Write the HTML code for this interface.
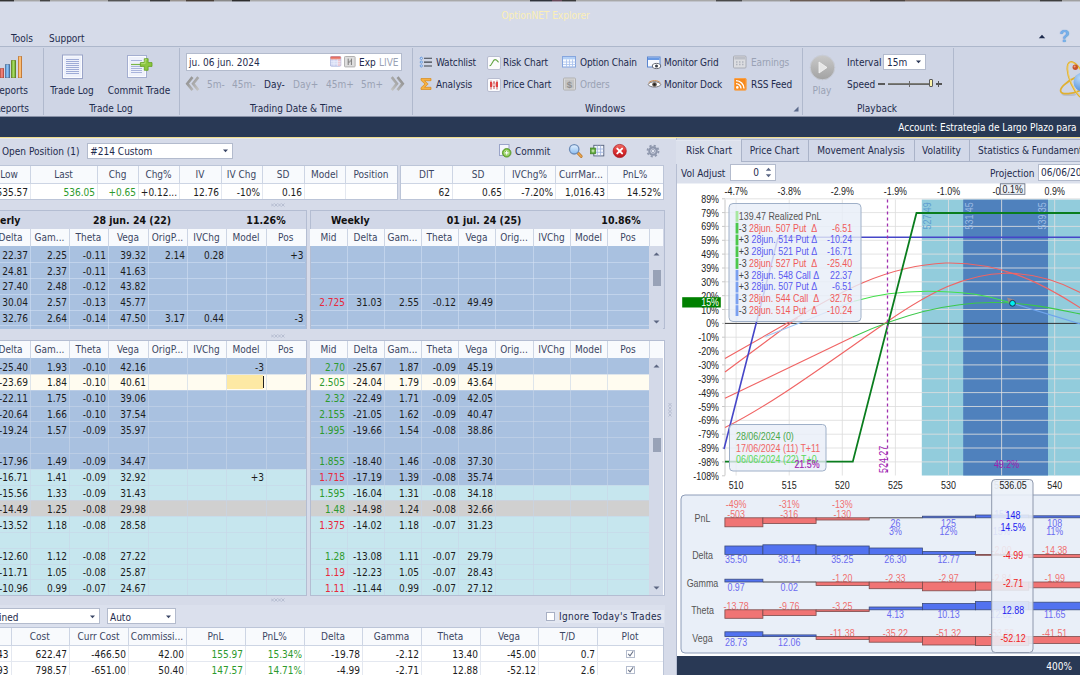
<!DOCTYPE html>
<html lang="en"><head><meta charset="utf-8"><title>OptionNET Explorer</title>
<style>
html,body{margin:0;padding:0}
body{width:1080px;height:675px;overflow:hidden;position:relative;background:#d6dbe9;font-family:"DejaVu Sans Condensed","Liberation Sans",sans-serif;font-size:10px;color:#1e2b4d;line-height:13px}
.b{position:absolute;display:block}
.t{position:absolute;white-space:nowrap;height:13px;line-height:13px}
.dis{color:#9aa2b4}
.a{font-family:"Liberation Sans",sans-serif}
.h{color:#3b4663}
.d{color:#1c1c1c}
.bt{font-weight:bold;color:#111;font-size:10.5px}
.w{letter-spacing:-.12px}
</style></head>
<body>
<div class="b " style="left:0px;top:0px;width:1080px;height:1px;background:linear-gradient(90deg,#333 0px,#333 14px,#a6a6a6 14px,#a6a6a6 40px,#444 40px,#444 50px,#a8a8a8 50px,#a8a8a8 108px,#555 108px,#555 130px,#a0a0a0 130px,#a0a0a0 150px,#3c3c3c 150px,#3c3c3c 170px,#9a9490 170px,#9a9490 186px,#4a4038 186px,#4a4038 214px,#8a8a8a 214px,#8a8a8a 232px,#2e2e2e 232px,#2e2e2e 250px,#a9a9a9 250px,#a9a9a9 530px,#30343c 530px,#30343c 552px,#6a4a5a 552px,#6a4a5a 562px,#3a3a3a 562px,#3a3a3a 576px,#a8a8a8 576px,#a8a8a8 716px,#4a4a4a 716px,#4a4a4a 742px,#9c9c9c 742px,#9c9c9c 790px,#6a5c54 790px,#6a5c54 830px,#8a7a70 830px,#8a7a70 870px,#4c4440 870px,#4c4440 905px,#7c6c64 905px,#7c6c64 950px,#5a524c 950px,#5a524c 1000px,#8c8c8c 1000px,#8c8c8c 1040px,#3e3e3e 1040px,#3e3e3e 1062px,#a0a0a0 1062px,#a0a0a0 1080px)"></div>
<div class="b " style="left:0px;top:1px;width:1080px;height:1px;opacity:.45;background:linear-gradient(90deg,#333 0px,#333 14px,#a6a6a6 14px,#a6a6a6 40px,#444 40px,#444 50px,#a8a8a8 50px,#a8a8a8 108px,#555 108px,#555 130px,#a0a0a0 130px,#a0a0a0 150px,#3c3c3c 150px,#3c3c3c 170px,#9a9490 170px,#9a9490 186px,#4a4038 186px,#4a4038 214px,#8a8a8a 214px,#8a8a8a 232px,#2e2e2e 232px,#2e2e2e 250px,#a9a9a9 250px,#a9a9a9 530px,#30343c 530px,#30343c 552px,#6a4a5a 552px,#6a4a5a 562px,#3a3a3a 562px,#3a3a3a 576px,#a8a8a8 576px,#a8a8a8 716px,#4a4a4a 716px,#4a4a4a 742px,#9c9c9c 742px,#9c9c9c 790px,#6a5c54 790px,#6a5c54 830px,#8a7a70 830px,#8a7a70 870px,#4c4440 870px,#4c4440 905px,#7c6c64 905px,#7c6c64 950px,#5a524c 950px,#5a524c 1000px,#8c8c8c 1000px,#8c8c8c 1040px,#3e3e3e 1040px,#3e3e3e 1062px,#a0a0a0 1062px,#a0a0a0 1080px)"></div>
<div class="t " style="left:445.5px;top:9.25px;color:#fbefb5;width:200px;text-align:center;font-size:10px">OptionNET Explorer</div>
<div class="t " style="left:11px;top:31.75px;">Tools</div>
<div class="t " style="left:49px;top:31.75px;">Support</div>
<svg class="b" style="left:1037.300px;top:32px" width="10" height="8"><path d="M1.800 6.200 L5 2.800 L8.200 6.200Z" fill="#1e2b4d"/></svg>
<div class="t " style="left:1059.5px;top:30.25px;color:#78b0ea;font-weight:bold;font-size:16.500px;font-family:'Liberation Sans',sans-serif;text-shadow:0 0 1px #3f7fc5">?</div>
<div class="b " style="left:0px;top:47px;width:1080px;height:69px;background:#cfd5e5"></div>
<div class="b " style="left:0px;top:46px;width:1080px;height:1px;background:#adb7cb"></div>
<div class="b " style="left:43px;top:48px;width:1px;height:67px;background:#b0b9cd"></div>
<div class="b " style="left:179px;top:48px;width:1px;height:67px;background:#b0b9cd"></div>
<div class="b " style="left:412px;top:48px;width:1px;height:67px;background:#b0b9cd"></div>
<div class="b " style="left:802px;top:48px;width:1px;height:67px;background:#b0b9cd"></div>
<div class="b " style="left:953px;top:48px;width:1px;height:67px;background:#b0b9cd"></div>
<div class="b " style="left:0px;top:68px;width:3.5px;height:9.5px;background:linear-gradient(90deg,#e8645c,#f08a80 50%,#d84c44);border-radius:1px 1px 0 0;box-shadow:inset 0 0 0 .6px rgba(90,50,30,.45)"></div>
<div class="b " style="left:5px;top:64px;width:4.5px;height:13.5px;background:linear-gradient(90deg,#4a90d8,#8cc0f0 50%,#3a7cc4);border-radius:1px 1px 0 0;box-shadow:inset 0 0 0 .6px rgba(90,50,30,.45)"></div>
<div class="b " style="left:11px;top:60px;width:5px;height:17.5px;background:linear-gradient(90deg,#6aa82a,#a4d860 50%,#5a9a20);border-radius:1px 1px 0 0;box-shadow:inset 0 0 0 .6px rgba(90,50,30,.45)"></div>
<div class="b " style="left:17.5px;top:55.5px;width:4.5px;height:22px;background:linear-gradient(90deg,#f09030,#ffd090 50%,#e88428);border-radius:1px 1px 0 0;box-shadow:inset 0 0 0 .6px rgba(90,50,30,.45)"></div>
<div class="t " style="left:-20px;top:83.75px;width:48px;text-align:right;">Reports</div>
<div class="t " style="left:-20px;top:101.75px;width:49px;text-align:right;">Reports</div>
<svg class="b" style="left:61px;top:54px" width="23" height="26" viewBox="0 0 23 26">
<rect x="1.5" y="1" width="20" height="23.5" fill="#fbfcff" stroke="#9aa4c8" stroke-width="1"/>
<rect x="3" y="2.5" width="17" height="20.5" fill="#eef1fb"/>
<g stroke="#9eabd6" stroke-width="1.150"><path d="M5 5.5h13M5 7.5h13M5 9.5h13M5 11.5h13M5 13.5h13M5 15.5h13M5 17.5h13M5 19.5h13"/></g></svg>
<div class="t " style="left:42px;top:83.75px;width:60px;text-align:center;">Trade Log</div>
<svg class="b" style="left:126px;top:54px" width="28" height="26" viewBox="0 0 28 26">
<rect x="1.5" y="1.5" width="19" height="22" fill="#fbfcff" stroke="#a4aed0" stroke-width="1"/>
<rect x="3" y="3" width="16" height="19" fill="#eef1fb"/>
<g stroke="#a9b4dc" stroke-width="1"><path d="M5 6.5h11M5 12.5h11M5 14.5h11M5 16.5h11M5 18.5h11"/></g>
<path d="M5 10.5h10" stroke="#7ab648" stroke-width="1.2"/>
<path d="M14.400 8.600h3.900v-3.900h3.800v3.900h3.900v3.800h-3.900v3.900h-3.800v-3.900h-3.900z" fill="#8cc63f" stroke="#62a01f" stroke-width=".8" stroke-linejoin="round"/><path d="M15.200 9.600h3.900v-3.900h1.800" fill="none" stroke="#c4e88c" stroke-width=".7"/>
</svg>
<div class="t " style="left:99px;top:83.75px;width:80px;text-align:center;">Commit Trade</div>
<div class="t " style="left:71px;top:101.75px;width:80px;text-align:center;">Trade Log</div>
<div class="b " style="left:186px;top:53px;width:215.5px;height:17.6px;background:#fff;border:1px solid #b3bbcd;box-sizing:border-box"></div>
<div class="t " style="left:189px;top:55.75px;">ju. 06 jun. 2024</div>
<svg class="b" style="left:330px;top:56px" width="12" height="11" viewBox="0 0 12 11"><defs><linearGradient id="calh" x1="0" y1="0" x2="0" y2="1"><stop offset="0" stop-color="#e2584a"/><stop offset="1" stop-color="#f0a090"/></linearGradient></defs><rect x=".4" y=".4" width="10.400" height="9.800" rx="1" fill="#d4daf4" stroke="#a9b2dc" stroke-width=".8"/><rect x=".5" y=".5" width="10.200" height="3" rx=".8" fill="url(#calh)"/><rect x="7.600" y="3.600" width="2.900" height="6.200" fill="#f0c4cc"/><path d="M.8 5.700h9.800M.8 7.800h9.800M4 3.600v6.300M7.400 3.600v6.300" stroke="#eef1fc" stroke-width=".7"/></svg>
<svg class="b" style="left:344px;top:55.600px" width="12" height="12" viewBox="0 0 12 12"><rect x=".5" y=".5" width="10.600" height="10.400" rx=".8" fill="#dedede" stroke="#b2b2b2"/><path d="M4.200 2.600v6.400M7.400 2.600v6.400M4.200 6h1.700M5.700 5h1.700" stroke="#7c7c7c" stroke-width="1"/></svg>
<div class="t " style="left:359px;top:55.75px;">Exp</div>
<div class="t dis" style="left:379px;top:55.75px;">LIVE</div>
<svg class="b" style="left:184.5px;top:76px" width="16" height="16" viewBox="0 0 16 16"><defs><linearGradient id="cg1" x1="0" y1="0" x2="1" y2="1"><stop offset="0" stop-color="#8c8c8c"/><stop offset="1" stop-color="#c4c4c4"/></linearGradient></defs><g fill="none" stroke="url(#cg1)" stroke-width="2.700" stroke-linejoin="miter"><path d="M7.500 1.200 L2.300 7.700 L7.500 14.200 M13.300 1.200 L8.100 7.700 L13.300 14.200"/></g></svg>
<svg class="b" style="left:389px;top:76px" width="16" height="16" viewBox="0 0 16 16"><defs><linearGradient id="cg2" x1="1" y1="0" x2="0" y2="1"><stop offset="0" stop-color="#8c8c8c"/><stop offset="1" stop-color="#c4c4c4"/></linearGradient></defs><g fill="none" stroke="url(#cg2)" stroke-width="2.700" stroke-linejoin="miter"><path d="M2.700 1.200 L7.900 7.700 L2.700 14.200 M8.500 1.200 L13.700 7.700 L8.500 14.200"/></g></svg>
<div class="t dis" style="left:207px;top:77.75px;">5m-</div>
<div class="t dis" style="left:232px;top:77.75px;">45m-</div>
<div class="t " style="left:264px;top:77.75px;">Day-</div>
<div class="t dis" style="left:293px;top:77.75px;">Day+</div>
<div class="t dis" style="left:326px;top:77.75px;">45m+</div>
<div class="t dis" style="left:361px;top:77.75px;">5m+</div>
<div class="t " style="left:236px;top:101.75px;width:120px;text-align:center;">Trading Date &amp; Time</div>
<svg class="b" style="left:419px;top:56px" width="14" height="12" viewBox="0 0 14 12"><g fill="#eaf2ff" stroke="#4a86d8" stroke-width=".8"><circle cx="2.300" cy="2.300" r="1.100"/><circle cx="2.300" cy="6.100" r="1.100"/><circle cx="2.300" cy="9.900" r="1.100"/></g><path d="M5 2.300h8M5 6.100h8M5 9.900h8" stroke="#3f444e" stroke-width="1.050"/></svg>
<div class="t " style="left:436px;top:56.25px;letter-spacing:-.15px">Watchlist</div>
<svg class="b" style="left:419px;top:77px" width="14" height="14" viewBox="0 0 14 14"><path d="M2 1.5h10v2.2H5.6l3.6 3.3-3.6 3.3H12v2.2H2v-1.8l4-3.7-4-3.7z" fill="#f6b042" stroke="#d88a1c" stroke-width=".7"/></svg>
<div class="t w" style="left:436px;top:78.15px;">Analysis</div>
<svg class="b" style="left:487px;top:55.500px" width="14" height="14" viewBox="0 0 14 14"><rect x=".5" y=".5" width="13" height="13" rx="1.5" fill="#fbfbfd" stroke="#b8bdd0"/><path d="M2.500 9.800C5 9.800 5.600 3.600 8 3.600S10.400 5.800 11.600 6.200" fill="none" stroke="#63a544" stroke-width="1.100"/></svg>
<div class="t w" style="left:503px;top:56.25px;">Risk Chart</div>
<svg class="b" style="left:487px;top:77.500px" width="14" height="14" viewBox="0 0 14 14"><rect x=".5" y=".5" width="13" height="13" rx="1.5" fill="#fbfbfd" stroke="#b8bdd0"/><path d="M4 2.5v9M7 3v8M10 2.5v9" stroke="#c03030" stroke-width=".8"/><rect x="3" y="4" width="2" height="5" fill="#e04040"/><rect x="6" y="5" width="2" height="3.5" fill="#fff" stroke="#c03030" stroke-width=".6"/><rect x="9" y="4" width="2" height="5" fill="#e04040"/></svg>
<div class="t w" style="left:503px;top:78.15px;">Price Chart</div>
<svg class="b" style="left:562px;top:55px" width="15" height="14" viewBox="0 0 15 14"><rect x=".5" y="1.500" width="13" height="10.500" fill="#fafcff" stroke="#86a6de"/><rect x="1" y="2" width="12" height="2.300" fill="#b4d0f6"/><path d="M1 7h12.5M1 9.5h12.5M4.5 4.5v8M7.5 4.5v8M10.5 4.5v8" stroke="#a8c0ec" stroke-width=".8"/></svg>
<div class="t " style="left:580px;top:56.25px;letter-spacing:-.15px">Option Chain</div>
<svg class="b" style="left:563px;top:77px" width="13" height="14" viewBox="0 0 13 14"><rect x=".5" y="1" width="12" height="12" rx="1" fill="#d9d9d9" stroke="#b0b0b0"/><rect x="2" y="2.5" width="9" height="9" fill="#c4c4c4"/><text x="6.500" y="10.800" font-size="9.500" font-weight="bold" text-anchor="middle" fill="#909090" font-family="Liberation Sans">$</text></svg>
<div class="t dis w" style="left:580px;top:78.15px;">Orders</div>
<svg class="b" style="left:647px;top:56px" width="15" height="14" viewBox="0 0 15 14"><rect x=".5" y="1" width="12.5" height="10" fill="#f6f9ff" stroke="#5a86d0"/><rect x="1" y="1.5" width="11.5" height="2.5" fill="#6a9ae4"/><ellipse cx="9.5" cy="10" rx="4.2" ry="2.6" fill="#fff" stroke="#555a66" stroke-width=".9"/><circle cx="9.5" cy="10" r="1.5" fill="#39404e"/></svg>
<div class="t w" style="left:664px;top:56.25px;">Monitor Grid</div>
<svg class="b" style="left:647px;top:78px" width="15" height="12" viewBox="0 0 15 12"><path d="M1 6.5C3.5 2.8 11.5 2.8 14 6.5 11.5 10 3.5 10 1 6.5z" fill="#fff" stroke="#6a6a72" stroke-width=".9"/><path d="M1.5 5C4 1.8 11 1.8 13.5 5" fill="none" stroke="#d09050" stroke-width="1"/><circle cx="7.5" cy="6.5" r="2.3" fill="#5a5048"/><circle cx="7.5" cy="6.5" r="1" fill="#1a1a1a"/></svg>
<div class="t w" style="left:664px;top:78.15px;">Monitor Dock</div>
<svg class="b" style="left:733px;top:55px" width="14" height="14" viewBox="0 0 14 14"><rect x=".5" y="1" width="12.500" height="12" rx="1" fill="#dcdde1" stroke="#a9acb5"/><rect x="1.500" y="2" width="10.500" height="2.500" fill="#bcbfc7"/><path d="M3 7h1.5M6 7h1.5M9 7h1.5M3 9.5h1.5M6 9.5h1.5M9 9.5h1.5" stroke="#b0b4be" stroke-width="1.4"/></svg>
<div class="t dis w" style="left:751px;top:56.25px;">Earnings</div>
<svg class="b" style="left:734px;top:78px" width="13" height="13" viewBox="0 0 13 13"><rect x="0" y="0" width="12.5" height="12.5" rx="1.5" fill="#f58a1f"/><rect x=".5" y=".5" width="11.5" height="11.5" rx="1.2" fill="none" stroke="#ffb060" stroke-width=".6"/><circle cx="3.3" cy="9.4" r="1.3" fill="#fff"/><path d="M2 5.6a5 5 0 0 1 5 5M2 2.6a8 8 0 0 1 8 8" fill="none" stroke="#fff" stroke-width="1.4"/></svg>
<div class="t w" style="left:751px;top:78.15px;">RSS Feed</div>
<div class="t " style="left:565px;top:101.75px;width:80px;text-align:center;">Windows</div>
<svg class="b" style="left:793px;top:106px" width="6" height="6"><path d="M5.5 .5V5.5H.5Z" fill="#5c6b8c"/></svg>
<svg class="b" style="left:809px;top:53.500px" width="27" height="27" viewBox="0 0 27 27"><defs><linearGradient id="pg" x1="0" y1="0" x2="0" y2="1"><stop offset="0" stop-color="#c9c9c9"/><stop offset="1" stop-color="#a2a2a2"/></linearGradient></defs><circle cx="13.5" cy="13.5" r="12.3" fill="url(#pg)" stroke="#c8ccd6" stroke-width="1"/><path d="M10 8l8 5.5-8 5.5z" fill="#e6e6e6" stroke="#f4f4f4" stroke-width=".8"/></svg>
<div class="t dis" style="left:802px;top:83.75px;width:40px;text-align:center;">Play</div>
<div class="t " style="left:847px;top:56.25px;">Interval</div>
<div class="b " style="left:883px;top:53.6px;width:42.5px;height:16.8px;background:#fff;border:1px solid #b3bbcd;box-sizing:border-box"></div>
<div class="t " style="left:887px;top:55.75px;">15m</div>
<svg class="b" style="left:915px;top:60px" width="7" height="4"><path d="M1 .6h5L3.500 3.300z" fill="#2a3656"/></svg>
<div class="t " style="left:847px;top:78.15px;">Speed</div>
<div class="b " style="left:878.3px;top:83px;width:6.4px;height:1.6px;background:#5a5a5a"></div>
<div class="b " style="left:888px;top:83px;width:42px;height:1.6px;background:linear-gradient(#8a8a82,#5c5c5c)"></div>
<div class="b " style="left:908.8px;top:81px;width:1.5px;height:5.5px;background:#6a6a6a"></div>
<div class="b " style="left:929px;top:79px;width:3.8px;height:8px;background:#fbf3a8;border:1px solid #5a5a5a;box-sizing:border-box;border-radius:1px"></div>
<div class="b " style="left:935.7px;top:83px;width:6px;height:1.6px;background:#555"></div>
<div class="b " style="left:937.9px;top:80.8px;width:1.6px;height:6px;background:#555"></div>
<div class="t " style="left:837px;top:101.75px;width:80px;text-align:center;">Playback</div>
<svg class="b" style="left:1056px;top:56px" width="24" height="48" viewBox="1056 56 24 48"><defs><radialGradient id="sg" cx=".35" cy=".3" r=".8"><stop offset="0" stop-color="#b8d8f8"/><stop offset="1" stop-color="#4a8ad8"/></radialGradient></defs><ellipse cx="1069" cy="94.500" rx="7.500" ry="1.600" fill="#a8acb8" opacity=".55"/><g fill="none" stroke="#e0b030" stroke-width="1.700"><ellipse cx="1078" cy="80.500" rx="7.500" ry="20" transform="rotate(-24 1078 80.500)"/><ellipse cx="1080" cy="83" rx="21" ry="7" transform="rotate(-24 1080 83)"/></g><g fill="none" stroke="#f8e08a" stroke-width=".6"><ellipse cx="1078" cy="80.500" rx="7" ry="19.500" transform="rotate(-24 1078 80.500)"/></g><circle cx="1083" cy="82" r="9.500" fill="url(#sg)"/><circle cx="1075.300" cy="67.200" r="2.700" fill="#c8522a"/><circle cx="1074.600" cy="66.500" r="1" fill="#f0a080"/></svg>
<div class="b " style="left:0px;top:116px;width:1080px;height:1px;background:#8790a6"></div>
<div class="b " style="left:0px;top:117px;width:1080px;height:20px;background:#293955"></div>
<div class="b " style="left:0px;top:137px;width:1080px;height:1px;background:#efdc8e"></div>
<div class="b " style="left:0px;top:138px;width:1080px;height:1px;background:#e6e8ea"></div>
<div class="t " style="left:776.5px;top:120.75px;width:300px;text-align:right;color:#fff;letter-spacing:-.05px">Account: Estrategia de Largo Plazo para</div>
<div class="t " style="left:2px;top:144.5px;">Open Position (1)</div>
<div class="b " style="left:87px;top:143px;width:146px;height:16px;background:#fff;border:1px solid #b3bbcd;box-sizing:border-box"></div>
<div class="t " style="left:90.3px;top:144.5px;">#214 Custom</div>
<svg class="b" style="left:222px;top:149px" width="7" height="4"><path d="M1 .6h5L3.500 3.300z" fill="#3a4666"/></svg>
<svg class="b" style="left:498px;top:143px" width="15" height="15" viewBox="498 143 15 15"><rect x="499.500" y="144.500" width="9.500" height="11" fill="#f4f6fc" stroke="#9aa4c8"/><circle cx="506.700" cy="152.800" r="4.300" fill="#76bc3c" stroke="#4f8f22" stroke-width=".8"/><circle cx="506.700" cy="152.800" r="2.600" fill="none" stroke="#c8eaa4" stroke-width=".7"/><path d="M504.700 152.800h4M506.700 150.800v4" stroke="#fff" stroke-width="1.200"/></svg>
<div class="t " style="left:515px;top:144.5px;">Commit</div>
<svg class="b" style="left:567px;top:142px" width="17" height="17" viewBox="567 142 17 17"><defs><linearGradient id="lg1" x1="0" y1="0" x2="0" y2="1"><stop offset="0" stop-color="#e4f2ff"/><stop offset="1" stop-color="#8cbcf0"/></linearGradient></defs><path d="M577.500 152.500l3.600 3.800" stroke="#b87428" stroke-width="3" stroke-linecap="round"/><path d="M577.500 152.500l3.600 3.800" stroke="#eca850" stroke-width="1.600" stroke-linecap="round"/><circle cx="574.200" cy="149.300" r="4.700" fill="url(#lg1)" stroke="#6c8cb8" stroke-width="1.300"/></svg>
<svg class="b" style="left:589px;top:143px" width="16" height="15" viewBox="589 143 16 15"><rect x="593.800" y="145.300" width="10" height="10.600" fill="#f4f7fd" stroke="#55627e" stroke-width=".9"/><path d="M597.300 145.500v10.200M600.600 145.500v10.200M594 149h9.600M594 152.300h9.600" stroke="#9ab0dc" stroke-width=".8"/><rect x="590.500" y="148" width="5" height="5.800" fill="#5faa3c" stroke="#3f7f22" stroke-width=".7"/><path d="M591.500 150.900h3M593 149.400v3" stroke="#dff2c8" stroke-width=".9"/></svg>
<svg class="b" style="left:611px;top:143px" width="17" height="16" viewBox="611 143 17 16"><defs><linearGradient id="lg2" x1="0" y1="0" x2="0" y2="1"><stop offset="0" stop-color="#f07068"/><stop offset=".5" stop-color="#dc3030"/><stop offset="1" stop-color="#b81820"/></linearGradient></defs><circle cx="619.700" cy="151" r="6.600" fill="url(#lg2)" stroke="#a81820" stroke-width=".7"/><path d="M617.300 148.600l4.800 4.800M622.100 148.600l-4.800 4.800" stroke="#fff" stroke-width="2" stroke-linecap="round"/></svg>
<svg class="b" style="left:645px;top:143px" width="16" height="16" viewBox="645 143 16 16"><circle cx="653" cy="151" r="5.500" fill="none" stroke="#8e97ad" stroke-width="1.800" stroke-dasharray="2.160 2.160"/><circle cx="653" cy="151" r="3.700" fill="#d6dbe9" stroke="#8e97ad" stroke-width="2.200"/><circle cx="653" cy="151" r="1.700" fill="#dfe3ee" stroke="#8e97ad" stroke-width=".7"/></svg>
<div class="b " style="left:-12px;top:165px;width:410px;height:35px;background:#fff;border:1px solid #bcc5d8;box-sizing:border-box"></div>
<div class="b " style="left:-12px;top:166px;width:409px;height:17px;background:#f8fafd"></div>
<div class="t h" style="left:-12px;top:168.0px;width:42px;text-align:center;">Low</div>
<div class="t h" style="left:30px;top:168.0px;width:67px;text-align:center;">Last</div>
<div class="t h" style="left:97px;top:168.0px;width:41px;text-align:center;">Chg</div>
<div class="t h" style="left:138px;top:168.0px;width:41px;text-align:center;">Chg%</div>
<div class="t h" style="left:179px;top:168.0px;width:42px;text-align:center;">IV</div>
<div class="t h" style="left:221px;top:168.0px;width:41px;text-align:center;">IV Chg</div>
<div class="t h" style="left:262px;top:168.0px;width:42px;text-align:center;">SD</div>
<div class="t h" style="left:304px;top:168.0px;width:41px;text-align:center;">Model</div>
<div class="t h" style="left:345px;top:168.0px;width:52px;text-align:center;">Position</div>
<div class="b " style="left:30px;top:166px;width:1px;height:17px;background:#cdd5e4"></div>
<div class="b " style="left:97px;top:166px;width:1px;height:17px;background:#cdd5e4"></div>
<div class="b " style="left:138px;top:166px;width:1px;height:17px;background:#cdd5e4"></div>
<div class="b " style="left:179px;top:166px;width:1px;height:17px;background:#cdd5e4"></div>
<div class="b " style="left:221px;top:166px;width:1px;height:17px;background:#cdd5e4"></div>
<div class="b " style="left:262px;top:166px;width:1px;height:17px;background:#cdd5e4"></div>
<div class="b " style="left:304px;top:166px;width:1px;height:17px;background:#cdd5e4"></div>
<div class="b " style="left:345px;top:166px;width:1px;height:17px;background:#cdd5e4"></div>
<div class="b " style="left:-12px;top:183px;width:409px;height:1px;background:#cdd5e4"></div>
<div class="b " style="left:30px;top:184px;width:1px;height:15px;background:#e4e8f0"></div>
<div class="b " style="left:97px;top:184px;width:1px;height:15px;background:#e4e8f0"></div>
<div class="b " style="left:138px;top:184px;width:1px;height:15px;background:#e4e8f0"></div>
<div class="b " style="left:179px;top:184px;width:1px;height:15px;background:#e4e8f0"></div>
<div class="b " style="left:221px;top:184px;width:1px;height:15px;background:#e4e8f0"></div>
<div class="b " style="left:262px;top:184px;width:1px;height:15px;background:#e4e8f0"></div>
<div class="b " style="left:304px;top:184px;width:1px;height:15px;background:#e4e8f0"></div>
<div class="b " style="left:345px;top:184px;width:1px;height:15px;background:#e4e8f0"></div>
<div class="t d" style="left:-12px;top:186.0px;width:40px;text-align:right;">535.57</div>
<div class="t d" style="left:30px;top:186.0px;width:65px;text-align:right;color:#2d9a2d;">536.05</div>
<div class="t d" style="left:97px;top:186.0px;width:39px;text-align:right;color:#2d9a2d;">+0.65</div>
<div class="t d" style="left:138px;top:186.0px;width:39px;text-align:right;">+0.12...</div>
<div class="t d" style="left:179px;top:186.0px;width:40px;text-align:right;">12.76</div>
<div class="t d" style="left:221px;top:186.0px;width:39px;text-align:right;">-10%</div>
<div class="t d" style="left:262px;top:186.0px;width:40px;text-align:right;">0.16</div>
<div class="b " style="left:400px;top:165px;width:264px;height:35px;background:#fff;border:1px solid #bcc5d8;box-sizing:border-box"></div>
<div class="b " style="left:401px;top:166px;width:262px;height:17px;background:#f8fafd"></div>
<div class="t h" style="left:401px;top:168.0px;width:51px;text-align:center;">DIT</div>
<div class="t h" style="left:452px;top:168.0px;width:52px;text-align:center;">SD</div>
<div class="t h" style="left:504px;top:168.0px;width:51px;text-align:center;">IVChg%</div>
<div class="t h" style="left:555px;top:168.0px;width:52px;text-align:center;">CurrMar...</div>
<div class="t h" style="left:607px;top:168.0px;width:56px;text-align:center;">PnL%</div>
<div class="b " style="left:452px;top:166px;width:1px;height:17px;background:#cdd5e4"></div>
<div class="b " style="left:504px;top:166px;width:1px;height:17px;background:#cdd5e4"></div>
<div class="b " style="left:555px;top:166px;width:1px;height:17px;background:#cdd5e4"></div>
<div class="b " style="left:607px;top:166px;width:1px;height:17px;background:#cdd5e4"></div>
<div class="b " style="left:401px;top:183px;width:262px;height:1px;background:#cdd5e4"></div>
<div class="b " style="left:452px;top:184px;width:1px;height:15px;background:#e4e8f0"></div>
<div class="b " style="left:504px;top:184px;width:1px;height:15px;background:#e4e8f0"></div>
<div class="b " style="left:555px;top:184px;width:1px;height:15px;background:#e4e8f0"></div>
<div class="b " style="left:607px;top:184px;width:1px;height:15px;background:#e4e8f0"></div>
<div class="t d" style="left:401px;top:186.0px;width:49px;text-align:right;">62</div>
<div class="t d" style="left:452px;top:186.0px;width:50px;text-align:right;">0.65</div>
<div class="t d" style="left:504px;top:186.0px;width:49px;text-align:right;">-7.20%</div>
<div class="t d" style="left:555px;top:186.0px;width:50px;text-align:right;">1,016.43</div>
<div class="t d" style="left:607px;top:186.0px;width:54px;text-align:right;">14.52%</div>
<svg class="b" style="left:271px;top:203px" width="14" height="4"><path d="M0 .5l3 3M3 .5l-3 3M3.500 .5l3 3M6.500 .5l-3 3M7 .5l3 3M10 .5l-3 3M10.500 .5l3 3M13.500 .5l-3 3" stroke="#aab3c8" stroke-width=".7"/></svg>
<svg class="b" style="left:271px;top:334px" width="14" height="4"><path d="M0 .5l3 3M3 .5l-3 3M3.500 .5l3 3M6.500 .5l-3 3M7 .5l3 3M10 .5l-3 3M10.500 .5l3 3M13.500 .5l-3 3" stroke="#aab3c8" stroke-width=".7"/></svg>
<svg class="b" style="left:271px;top:598px" width="14" height="4"><path d="M0 .5l3 3M3 .5l-3 3M3.500 .5l3 3M6.500 .5l-3 3M7 .5l3 3M10 .5l-3 3M10.500 .5l3 3M13.500 .5l-3 3" stroke="#aab3c8" stroke-width=".7"/></svg>
<svg class="b" style="left:668.400px;top:402.500px" width="4" height="14"><path d="M.5 0l3 3M.5 3l3-3M.5 3.500l3 3M.5 6.500l3-3M.5 7l3 3M.5 10l3-3M.5 10.500l3 3M.5 13.500l3-3" stroke="#aab3c8" stroke-width=".7"/></svg>
<div class="b " style="left:-9px;top:210px;width:315.5px;height:119px;background:#d1d7e7;border:1px solid #b4bdd2;box-sizing:border-box"></div>
<div class="t bt" style="left:0px;top:214px;">erly</div>
<div class="t bt" style="left:82px;top:214px;width:100px;text-align:center;">28 jun. 24 (22)</div>
<div class="t bt" style="left:236px;top:214px;width:60px;text-align:center;">11.26%</div>
<div class="b " style="left:-9px;top:229px;width:314.5px;height:17px;background:#f8fafd"></div>
<div class="t h" style="left:-9px;top:231.0px;width:39px;text-align:center;">Delta</div>
<div class="t h" style="left:30px;top:231.0px;width:39px;text-align:center;">Gam...</div>
<div class="t h" style="left:69px;top:231.0px;width:39px;text-align:center;">Theta</div>
<div class="t h" style="left:108px;top:231.0px;width:40px;text-align:center;">Vega</div>
<div class="t h" style="left:148px;top:231.0px;width:39px;text-align:center;">OrigP...</div>
<div class="t h" style="left:187px;top:231.0px;width:39px;text-align:center;">IVChg</div>
<div class="t h" style="left:226px;top:231.0px;width:40px;text-align:center;">Model</div>
<div class="t h" style="left:266px;top:231.0px;width:39.5px;text-align:center;">Pos</div>
<div class="b " style="left:30px;top:229px;width:1px;height:17px;background:#cdd5e4"></div>
<div class="b " style="left:69px;top:229px;width:1px;height:17px;background:#cdd5e4"></div>
<div class="b " style="left:108px;top:229px;width:1px;height:17px;background:#cdd5e4"></div>
<div class="b " style="left:148px;top:229px;width:1px;height:17px;background:#cdd5e4"></div>
<div class="b " style="left:187px;top:229px;width:1px;height:17px;background:#cdd5e4"></div>
<div class="b " style="left:226px;top:229px;width:1px;height:17px;background:#cdd5e4"></div>
<div class="b " style="left:266px;top:229px;width:1px;height:17px;background:#cdd5e4"></div>
<div class="b " style="left:-9px;top:246px;width:314.5px;height:82.5px;background:#a9c1e0"></div>
<div class="t d" style="left:-9px;top:248.8px;width:37px;text-align:right;">22.37</div>
<div class="t d" style="left:30px;top:248.8px;width:37px;text-align:right;">2.25</div>
<div class="t d" style="left:69px;top:248.8px;width:37px;text-align:right;">-0.11</div>
<div class="t d" style="left:108px;top:248.8px;width:38px;text-align:right;">39.32</div>
<div class="t d" style="left:148px;top:248.8px;width:37px;text-align:right;">2.14</div>
<div class="t d" style="left:187px;top:248.8px;width:37px;text-align:right;">0.28</div>
<div class="t d" style="left:266px;top:248.8px;width:37.5px;text-align:right;">+3</div>
<div class="t d" style="left:-9px;top:264.59999999999997px;width:37px;text-align:right;">24.81</div>
<div class="t d" style="left:30px;top:264.59999999999997px;width:37px;text-align:right;">2.37</div>
<div class="t d" style="left:69px;top:264.59999999999997px;width:37px;text-align:right;">-0.11</div>
<div class="t d" style="left:108px;top:264.59999999999997px;width:38px;text-align:right;">41.63</div>
<div class="t d" style="left:-9px;top:280.4px;width:37px;text-align:right;">27.40</div>
<div class="t d" style="left:30px;top:280.4px;width:37px;text-align:right;">2.48</div>
<div class="t d" style="left:69px;top:280.4px;width:37px;text-align:right;">-0.12</div>
<div class="t d" style="left:108px;top:280.4px;width:38px;text-align:right;">43.82</div>
<div class="t d" style="left:-9px;top:296.2px;width:37px;text-align:right;">30.04</div>
<div class="t d" style="left:30px;top:296.2px;width:37px;text-align:right;">2.57</div>
<div class="t d" style="left:69px;top:296.2px;width:37px;text-align:right;">-0.13</div>
<div class="t d" style="left:108px;top:296.2px;width:38px;text-align:right;">45.77</div>
<div class="t d" style="left:-9px;top:312.0px;width:37px;text-align:right;">32.76</div>
<div class="t d" style="left:30px;top:312.0px;width:37px;text-align:right;">2.64</div>
<div class="t d" style="left:69px;top:312.0px;width:37px;text-align:right;">-0.14</div>
<div class="t d" style="left:108px;top:312.0px;width:38px;text-align:right;">47.50</div>
<div class="t d" style="left:148px;top:312.0px;width:37px;text-align:right;">3.17</div>
<div class="t d" style="left:187px;top:312.0px;width:37px;text-align:right;">0.44</div>
<div class="t d" style="left:266px;top:312.0px;width:37.5px;text-align:right;">-3</div>
<div class="b " style="left:-9px;top:262px;width:314px;height:1px;background:rgba(214,226,244,.55)"></div>
<div class="b " style="left:-9px;top:278px;width:314px;height:1px;background:rgba(214,226,244,.55)"></div>
<div class="b " style="left:-9px;top:294px;width:314px;height:1px;background:rgba(214,226,244,.55)"></div>
<div class="b " style="left:-9px;top:310px;width:314px;height:1px;background:rgba(214,226,244,.55)"></div>
<div class="b " style="left:-9px;top:325px;width:314px;height:1px;background:rgba(214,226,244,.55)"></div>
<div class="b " style="left:30px;top:246px;width:1px;height:82.5px;background:rgba(214,226,244,.55)"></div>
<div class="b " style="left:69px;top:246px;width:1px;height:82.5px;background:rgba(214,226,244,.55)"></div>
<div class="b " style="left:108px;top:246px;width:1px;height:82.5px;background:rgba(214,226,244,.55)"></div>
<div class="b " style="left:148px;top:246px;width:1px;height:82.5px;background:rgba(214,226,244,.55)"></div>
<div class="b " style="left:187px;top:246px;width:1px;height:82.5px;background:rgba(214,226,244,.55)"></div>
<div class="b " style="left:226px;top:246px;width:1px;height:82.5px;background:rgba(214,226,244,.55)"></div>
<div class="b " style="left:266px;top:246px;width:1px;height:82.5px;background:rgba(214,226,244,.55)"></div>
<div class="b " style="left:309.5px;top:210px;width:355.0px;height:119px;background:#d1d7e7;border:1px solid #b4bdd2;box-sizing:border-box"></div>
<div class="t bt" style="left:331px;top:214px;">Weekly</div>
<div class="t bt" style="left:434px;top:214px;width:100px;text-align:center;">01 jul. 24 (25)</div>
<div class="t bt" style="left:591px;top:214px;width:60px;text-align:center;">10.86%</div>
<div class="b " style="left:310px;top:229px;width:353px;height:17px;background:#f8fafd"></div>
<div class="t h" style="left:310px;top:231.0px;width:37px;text-align:center;">Mid</div>
<div class="t h" style="left:347px;top:231.0px;width:37px;text-align:center;">Delta</div>
<div class="t h" style="left:384px;top:231.0px;width:37px;text-align:center;">Gam...</div>
<div class="t h" style="left:421px;top:231.0px;width:37px;text-align:center;">Theta</div>
<div class="t h" style="left:458px;top:231.0px;width:37px;text-align:center;">Vega</div>
<div class="t h" style="left:495px;top:231.0px;width:38px;text-align:center;">Orig...</div>
<div class="t h" style="left:533px;top:231.0px;width:37px;text-align:center;">IVChg</div>
<div class="t h" style="left:570px;top:231.0px;width:37px;text-align:center;">Model</div>
<div class="t h" style="left:607px;top:231.0px;width:42px;text-align:center;">Pos</div>
<div class="t h" style="left:649px;top:231.0px;width:14px;text-align:center;"></div>
<div class="b " style="left:347px;top:229px;width:1px;height:17px;background:#cdd5e4"></div>
<div class="b " style="left:384px;top:229px;width:1px;height:17px;background:#cdd5e4"></div>
<div class="b " style="left:421px;top:229px;width:1px;height:17px;background:#cdd5e4"></div>
<div class="b " style="left:458px;top:229px;width:1px;height:17px;background:#cdd5e4"></div>
<div class="b " style="left:495px;top:229px;width:1px;height:17px;background:#cdd5e4"></div>
<div class="b " style="left:533px;top:229px;width:1px;height:17px;background:#cdd5e4"></div>
<div class="b " style="left:570px;top:229px;width:1px;height:17px;background:#cdd5e4"></div>
<div class="b " style="left:607px;top:229px;width:1px;height:17px;background:#cdd5e4"></div>
<div class="b " style="left:649px;top:229px;width:1px;height:17px;background:#cdd5e4"></div>
<div class="b " style="left:310.5px;top:246px;width:338.5px;height:82.5px;background:#a9c1e0"></div>
<div class="t d" style="left:310px;top:296.2px;width:35px;text-align:right;color:#e8283c;">2.725</div>
<div class="t d" style="left:347px;top:296.2px;width:35px;text-align:right;">31.03</div>
<div class="t d" style="left:384px;top:296.2px;width:35px;text-align:right;">2.55</div>
<div class="t d" style="left:421px;top:296.2px;width:35px;text-align:right;">-0.12</div>
<div class="t d" style="left:458px;top:296.2px;width:35px;text-align:right;">49.49</div>
<div class="b " style="left:310.5px;top:262px;width:338.5px;height:1px;background:rgba(214,226,244,.55)"></div>
<div class="b " style="left:310.5px;top:278px;width:338.5px;height:1px;background:rgba(214,226,244,.55)"></div>
<div class="b " style="left:310.5px;top:294px;width:338.5px;height:1px;background:rgba(214,226,244,.55)"></div>
<div class="b " style="left:310.5px;top:310px;width:338.5px;height:1px;background:rgba(214,226,244,.55)"></div>
<div class="b " style="left:310.5px;top:325px;width:338.5px;height:1px;background:rgba(214,226,244,.55)"></div>
<div class="b " style="left:347px;top:246px;width:1px;height:82.5px;background:rgba(214,226,244,.55)"></div>
<div class="b " style="left:384px;top:246px;width:1px;height:82.5px;background:rgba(214,226,244,.55)"></div>
<div class="b " style="left:421px;top:246px;width:1px;height:82.5px;background:rgba(214,226,244,.55)"></div>
<div class="b " style="left:458px;top:246px;width:1px;height:82.5px;background:rgba(214,226,244,.55)"></div>
<div class="b " style="left:495px;top:246px;width:1px;height:82.5px;background:rgba(214,226,244,.55)"></div>
<div class="b " style="left:533px;top:246px;width:1px;height:82.5px;background:rgba(214,226,244,.55)"></div>
<div class="b " style="left:570px;top:246px;width:1px;height:82.5px;background:rgba(214,226,244,.55)"></div>
<div class="b " style="left:607px;top:246px;width:1px;height:82.5px;background:rgba(214,226,244,.55)"></div>
<div class="b " style="left:649px;top:246px;width:14px;height:82.5px;background:#d3d9e8"></div>
<svg class="b" style="left:653px;top:252px" width="7" height="4"><path d="M.5 3.500h6L3.500 .5z" fill="#5c6782"/></svg>
<svg class="b" style="left:653px;top:319.5px" width="7" height="4"><path d="M.5 .5h6L3.500 3.500z" fill="#5c6782"/></svg>
<div class="b " style="left:652.5px;top:270px;width:8.5px;height:15.5px;background:#98a2b7"></div>
<div class="b " style="left:-9px;top:340px;width:315.5px;height:256px;background:#fff;border:1px solid #b4bdd2;box-sizing:border-box"></div>
<div class="b " style="left:-9px;top:341px;width:314.5px;height:17px;background:#f8fafd"></div>
<div class="t h" style="left:-9px;top:343.0px;width:39px;text-align:center;">Delta</div>
<div class="t h" style="left:30px;top:343.0px;width:39px;text-align:center;">Gam...</div>
<div class="t h" style="left:69px;top:343.0px;width:39px;text-align:center;">Theta</div>
<div class="t h" style="left:108px;top:343.0px;width:40px;text-align:center;">Vega</div>
<div class="t h" style="left:148px;top:343.0px;width:39px;text-align:center;">OrigP...</div>
<div class="t h" style="left:187px;top:343.0px;width:39px;text-align:center;">IVChg</div>
<div class="t h" style="left:226px;top:343.0px;width:40px;text-align:center;">Model</div>
<div class="t h" style="left:266px;top:343.0px;width:39.5px;text-align:center;">Pos</div>
<div class="b " style="left:30px;top:341px;width:1px;height:17px;background:#cdd5e4"></div>
<div class="b " style="left:69px;top:341px;width:1px;height:17px;background:#cdd5e4"></div>
<div class="b " style="left:108px;top:341px;width:1px;height:17px;background:#cdd5e4"></div>
<div class="b " style="left:148px;top:341px;width:1px;height:17px;background:#cdd5e4"></div>
<div class="b " style="left:187px;top:341px;width:1px;height:17px;background:#cdd5e4"></div>
<div class="b " style="left:226px;top:341px;width:1px;height:17px;background:#cdd5e4"></div>
<div class="b " style="left:266px;top:341px;width:1px;height:17px;background:#cdd5e4"></div>
<div class="b " style="left:309.5px;top:340px;width:355px;height:256px;background:#fff;border:1px solid #b4bdd2;box-sizing:border-box"></div>
<div class="b " style="left:310px;top:341px;width:353px;height:17px;background:#f8fafd"></div>
<div class="t h" style="left:310px;top:343.0px;width:37px;text-align:center;">Mid</div>
<div class="t h" style="left:347px;top:343.0px;width:37px;text-align:center;">Delta</div>
<div class="t h" style="left:384px;top:343.0px;width:37px;text-align:center;">Gam...</div>
<div class="t h" style="left:421px;top:343.0px;width:37px;text-align:center;">Theta</div>
<div class="t h" style="left:458px;top:343.0px;width:37px;text-align:center;">Vega</div>
<div class="t h" style="left:495px;top:343.0px;width:38px;text-align:center;">Orig...</div>
<div class="t h" style="left:533px;top:343.0px;width:37px;text-align:center;">IVChg</div>
<div class="t h" style="left:570px;top:343.0px;width:37px;text-align:center;">Model</div>
<div class="t h" style="left:607px;top:343.0px;width:42px;text-align:center;">Pos</div>
<div class="t h" style="left:649px;top:343.0px;width:14px;text-align:center;"></div>
<div class="b " style="left:347px;top:341px;width:1px;height:17px;background:#cdd5e4"></div>
<div class="b " style="left:384px;top:341px;width:1px;height:17px;background:#cdd5e4"></div>
<div class="b " style="left:421px;top:341px;width:1px;height:17px;background:#cdd5e4"></div>
<div class="b " style="left:458px;top:341px;width:1px;height:17px;background:#cdd5e4"></div>
<div class="b " style="left:495px;top:341px;width:1px;height:17px;background:#cdd5e4"></div>
<div class="b " style="left:533px;top:341px;width:1px;height:17px;background:#cdd5e4"></div>
<div class="b " style="left:570px;top:341px;width:1px;height:17px;background:#cdd5e4"></div>
<div class="b " style="left:607px;top:341px;width:1px;height:17px;background:#cdd5e4"></div>
<div class="b " style="left:649px;top:341px;width:1px;height:17px;background:#cdd5e4"></div>
<div class="b " style="left:-9px;top:358px;width:314.5px;height:16px;background:#a9c1e0"></div>
<div class="b " style="left:310.5px;top:358px;width:338.5px;height:16px;background:#a9c1e0"></div>
<div class="b " style="left:-9px;top:374px;width:314.5px;height:16px;background:#fffcf0"></div>
<div class="b " style="left:310.5px;top:374px;width:338.5px;height:16px;background:#fffcf0"></div>
<div class="b " style="left:-9px;top:390px;width:314.5px;height:16px;background:#a9c1e0"></div>
<div class="b " style="left:310.5px;top:390px;width:338.5px;height:16px;background:#a9c1e0"></div>
<div class="b " style="left:-9px;top:406px;width:314.5px;height:15px;background:#a9c1e0"></div>
<div class="b " style="left:310.5px;top:406px;width:338.5px;height:15px;background:#a9c1e0"></div>
<div class="b " style="left:-9px;top:421px;width:314.5px;height:16px;background:#a9c1e0"></div>
<div class="b " style="left:310.5px;top:421px;width:338.5px;height:16px;background:#a9c1e0"></div>
<div class="b " style="left:-9px;top:437px;width:314.5px;height:16px;background:#a9c1e0"></div>
<div class="b " style="left:310.5px;top:437px;width:338.5px;height:16px;background:#a9c1e0"></div>
<div class="b " style="left:-9px;top:453px;width:314.5px;height:16px;background:#a9c1e0"></div>
<div class="b " style="left:310.5px;top:453px;width:338.5px;height:16px;background:#a9c1e0"></div>
<div class="b " style="left:-9px;top:469px;width:314.5px;height:16px;background:#c6e6ee"></div>
<div class="b " style="left:310.5px;top:469px;width:338.5px;height:16px;background:#a9c1e0"></div>
<div class="b " style="left:-9px;top:485px;width:314.5px;height:15px;background:#c6e6ee"></div>
<div class="b " style="left:310.5px;top:485px;width:338.5px;height:15px;background:#c6e6ee"></div>
<div class="b " style="left:-9px;top:500px;width:314.5px;height:16px;background:#d0d0d0"></div>
<div class="b " style="left:310.5px;top:500px;width:338.5px;height:16px;background:#d0d0d0"></div>
<div class="b " style="left:-9px;top:516px;width:314.5px;height:16px;background:#c6e6ee"></div>
<div class="b " style="left:310.5px;top:516px;width:338.5px;height:16px;background:#c6e6ee"></div>
<div class="b " style="left:-9px;top:532px;width:314.5px;height:16px;background:#c6e6ee"></div>
<div class="b " style="left:310.5px;top:532px;width:338.5px;height:16px;background:#c6e6ee"></div>
<div class="b " style="left:-9px;top:548px;width:314.5px;height:16px;background:#c6e6ee"></div>
<div class="b " style="left:310.5px;top:548px;width:338.5px;height:16px;background:#c6e6ee"></div>
<div class="b " style="left:-9px;top:564px;width:314.5px;height:15px;background:#c6e6ee"></div>
<div class="b " style="left:310.5px;top:564px;width:338.5px;height:15px;background:#c6e6ee"></div>
<div class="b " style="left:-9px;top:579px;width:314.5px;height:16px;background:#c6e6ee"></div>
<div class="b " style="left:310.5px;top:579px;width:338.5px;height:16px;background:#c6e6ee"></div>
<div class="b " style="left:227px;top:375px;width:36px;height:14px;background:#fde9a4"></div>
<div class="b " style="left:262.5px;top:376px;width:1px;height:12px;background:#222"></div>
<div class="t d" style="left:-9px;top:360.59999999999997px;width:37px;text-align:right;">-25.40</div>
<div class="t d" style="left:30px;top:360.59999999999997px;width:37px;text-align:right;">1.93</div>
<div class="t d" style="left:69px;top:360.59999999999997px;width:37px;text-align:right;">-0.10</div>
<div class="t d" style="left:108px;top:360.59999999999997px;width:38px;text-align:right;">42.16</div>
<div class="t d" style="left:226px;top:360.59999999999997px;width:38px;text-align:right;">-3</div>
<div class="t d" style="left:310px;top:360.59999999999997px;width:35px;text-align:right;color:#2d9a2d;">2.70</div>
<div class="t d" style="left:347px;top:360.59999999999997px;width:35px;text-align:right;">-25.67</div>
<div class="t d" style="left:384px;top:360.59999999999997px;width:35px;text-align:right;">1.87</div>
<div class="t d" style="left:421px;top:360.59999999999997px;width:35px;text-align:right;">-0.09</div>
<div class="t d" style="left:458px;top:360.59999999999997px;width:35px;text-align:right;">45.19</div>
<div class="t d" style="left:-9px;top:376.4px;width:37px;text-align:right;">-23.69</div>
<div class="t d" style="left:30px;top:376.4px;width:37px;text-align:right;">1.84</div>
<div class="t d" style="left:69px;top:376.4px;width:37px;text-align:right;">-0.10</div>
<div class="t d" style="left:108px;top:376.4px;width:38px;text-align:right;">40.61</div>
<div class="t d" style="left:310px;top:376.4px;width:35px;text-align:right;color:#2d9a2d;">2.505</div>
<div class="t d" style="left:347px;top:376.4px;width:35px;text-align:right;">-24.04</div>
<div class="t d" style="left:384px;top:376.4px;width:35px;text-align:right;">1.79</div>
<div class="t d" style="left:421px;top:376.4px;width:35px;text-align:right;">-0.09</div>
<div class="t d" style="left:458px;top:376.4px;width:35px;text-align:right;">43.64</div>
<div class="t d" style="left:-9px;top:392.2px;width:37px;text-align:right;">-22.11</div>
<div class="t d" style="left:30px;top:392.2px;width:37px;text-align:right;">1.75</div>
<div class="t d" style="left:69px;top:392.2px;width:37px;text-align:right;">-0.10</div>
<div class="t d" style="left:108px;top:392.2px;width:38px;text-align:right;">39.06</div>
<div class="t d" style="left:310px;top:392.2px;width:35px;text-align:right;color:#2d9a2d;">2.32</div>
<div class="t d" style="left:347px;top:392.2px;width:35px;text-align:right;">-22.49</div>
<div class="t d" style="left:384px;top:392.2px;width:35px;text-align:right;">1.71</div>
<div class="t d" style="left:421px;top:392.2px;width:35px;text-align:right;">-0.09</div>
<div class="t d" style="left:458px;top:392.2px;width:35px;text-align:right;">42.05</div>
<div class="t d" style="left:-9px;top:408.0px;width:37px;text-align:right;">-20.64</div>
<div class="t d" style="left:30px;top:408.0px;width:37px;text-align:right;">1.66</div>
<div class="t d" style="left:69px;top:408.0px;width:37px;text-align:right;">-0.10</div>
<div class="t d" style="left:108px;top:408.0px;width:38px;text-align:right;">37.54</div>
<div class="t d" style="left:310px;top:408.0px;width:35px;text-align:right;color:#2d9a2d;">2.155</div>
<div class="t d" style="left:347px;top:408.0px;width:35px;text-align:right;">-21.05</div>
<div class="t d" style="left:384px;top:408.0px;width:35px;text-align:right;">1.62</div>
<div class="t d" style="left:421px;top:408.0px;width:35px;text-align:right;">-0.09</div>
<div class="t d" style="left:458px;top:408.0px;width:35px;text-align:right;">40.47</div>
<div class="t d" style="left:-9px;top:423.79999999999995px;width:37px;text-align:right;">-19.24</div>
<div class="t d" style="left:30px;top:423.79999999999995px;width:37px;text-align:right;">1.57</div>
<div class="t d" style="left:69px;top:423.79999999999995px;width:37px;text-align:right;">-0.09</div>
<div class="t d" style="left:108px;top:423.79999999999995px;width:38px;text-align:right;">35.97</div>
<div class="t d" style="left:310px;top:423.79999999999995px;width:35px;text-align:right;color:#2d9a2d;">1.995</div>
<div class="t d" style="left:347px;top:423.79999999999995px;width:35px;text-align:right;">-19.66</div>
<div class="t d" style="left:384px;top:423.79999999999995px;width:35px;text-align:right;">1.54</div>
<div class="t d" style="left:421px;top:423.79999999999995px;width:35px;text-align:right;">-0.08</div>
<div class="t d" style="left:458px;top:423.79999999999995px;width:35px;text-align:right;">38.86</div>
<div class="t d" style="left:-9px;top:455.4px;width:37px;text-align:right;">-17.96</div>
<div class="t d" style="left:30px;top:455.4px;width:37px;text-align:right;">1.49</div>
<div class="t d" style="left:69px;top:455.4px;width:37px;text-align:right;">-0.09</div>
<div class="t d" style="left:108px;top:455.4px;width:38px;text-align:right;">34.47</div>
<div class="t d" style="left:310px;top:455.4px;width:35px;text-align:right;color:#2d9a2d;">1.855</div>
<div class="t d" style="left:347px;top:455.4px;width:35px;text-align:right;">-18.40</div>
<div class="t d" style="left:384px;top:455.4px;width:35px;text-align:right;">1.46</div>
<div class="t d" style="left:421px;top:455.4px;width:35px;text-align:right;">-0.08</div>
<div class="t d" style="left:458px;top:455.4px;width:35px;text-align:right;">37.30</div>
<div class="t d" style="left:-9px;top:471.2px;width:37px;text-align:right;">-16.71</div>
<div class="t d" style="left:30px;top:471.2px;width:37px;text-align:right;">1.41</div>
<div class="t d" style="left:69px;top:471.2px;width:37px;text-align:right;">-0.09</div>
<div class="t d" style="left:108px;top:471.2px;width:38px;text-align:right;">32.92</div>
<div class="t d" style="left:226px;top:471.2px;width:38px;text-align:right;">+3</div>
<div class="t d" style="left:310px;top:471.2px;width:35px;text-align:right;color:#e8283c;">1.715</div>
<div class="t d" style="left:347px;top:471.2px;width:35px;text-align:right;">-17.19</div>
<div class="t d" style="left:384px;top:471.2px;width:35px;text-align:right;">1.39</div>
<div class="t d" style="left:421px;top:471.2px;width:35px;text-align:right;">-0.08</div>
<div class="t d" style="left:458px;top:471.2px;width:35px;text-align:right;">35.74</div>
<div class="t d" style="left:-9px;top:487.0px;width:37px;text-align:right;">-15.56</div>
<div class="t d" style="left:30px;top:487.0px;width:37px;text-align:right;">1.33</div>
<div class="t d" style="left:69px;top:487.0px;width:37px;text-align:right;">-0.09</div>
<div class="t d" style="left:108px;top:487.0px;width:38px;text-align:right;">31.43</div>
<div class="t d" style="left:310px;top:487.0px;width:35px;text-align:right;color:#2d9a2d;">1.595</div>
<div class="t d" style="left:347px;top:487.0px;width:35px;text-align:right;">-16.04</div>
<div class="t d" style="left:384px;top:487.0px;width:35px;text-align:right;">1.31</div>
<div class="t d" style="left:421px;top:487.0px;width:35px;text-align:right;">-0.08</div>
<div class="t d" style="left:458px;top:487.0px;width:35px;text-align:right;">34.18</div>
<div class="t d" style="left:-9px;top:502.79999999999995px;width:37px;text-align:right;">-14.49</div>
<div class="t d" style="left:30px;top:502.79999999999995px;width:37px;text-align:right;">1.25</div>
<div class="t d" style="left:69px;top:502.79999999999995px;width:37px;text-align:right;">-0.08</div>
<div class="t d" style="left:108px;top:502.79999999999995px;width:38px;text-align:right;">29.98</div>
<div class="t d" style="left:310px;top:502.79999999999995px;width:35px;text-align:right;color:#2d9a2d;">1.48</div>
<div class="t d" style="left:347px;top:502.79999999999995px;width:35px;text-align:right;">-14.98</div>
<div class="t d" style="left:384px;top:502.79999999999995px;width:35px;text-align:right;">1.24</div>
<div class="t d" style="left:421px;top:502.79999999999995px;width:35px;text-align:right;">-0.08</div>
<div class="t d" style="left:458px;top:502.79999999999995px;width:35px;text-align:right;">32.66</div>
<div class="t d" style="left:-9px;top:518.6px;width:37px;text-align:right;">-13.52</div>
<div class="t d" style="left:30px;top:518.6px;width:37px;text-align:right;">1.18</div>
<div class="t d" style="left:69px;top:518.6px;width:37px;text-align:right;">-0.08</div>
<div class="t d" style="left:108px;top:518.6px;width:38px;text-align:right;">28.58</div>
<div class="t d" style="left:310px;top:518.6px;width:35px;text-align:right;color:#e8283c;">1.375</div>
<div class="t d" style="left:347px;top:518.6px;width:35px;text-align:right;">-14.02</div>
<div class="t d" style="left:384px;top:518.6px;width:35px;text-align:right;">1.18</div>
<div class="t d" style="left:421px;top:518.6px;width:35px;text-align:right;">-0.07</div>
<div class="t d" style="left:458px;top:518.6px;width:35px;text-align:right;">31.23</div>
<div class="t d" style="left:-9px;top:550.1999999999999px;width:37px;text-align:right;">-12.60</div>
<div class="t d" style="left:30px;top:550.1999999999999px;width:37px;text-align:right;">1.12</div>
<div class="t d" style="left:69px;top:550.1999999999999px;width:37px;text-align:right;">-0.08</div>
<div class="t d" style="left:108px;top:550.1999999999999px;width:38px;text-align:right;">27.22</div>
<div class="t d" style="left:310px;top:550.1999999999999px;width:35px;text-align:right;color:#2d9a2d;">1.28</div>
<div class="t d" style="left:347px;top:550.1999999999999px;width:35px;text-align:right;">-13.08</div>
<div class="t d" style="left:384px;top:550.1999999999999px;width:35px;text-align:right;">1.11</div>
<div class="t d" style="left:421px;top:550.1999999999999px;width:35px;text-align:right;">-0.07</div>
<div class="t d" style="left:458px;top:550.1999999999999px;width:35px;text-align:right;">29.79</div>
<div class="t d" style="left:-9px;top:566.0px;width:37px;text-align:right;">-11.71</div>
<div class="t d" style="left:30px;top:566.0px;width:37px;text-align:right;">1.05</div>
<div class="t d" style="left:69px;top:566.0px;width:37px;text-align:right;">-0.08</div>
<div class="t d" style="left:108px;top:566.0px;width:38px;text-align:right;">25.87</div>
<div class="t d" style="left:310px;top:566.0px;width:35px;text-align:right;color:#e8283c;">1.19</div>
<div class="t d" style="left:347px;top:566.0px;width:35px;text-align:right;">-12.23</div>
<div class="t d" style="left:384px;top:566.0px;width:35px;text-align:right;">1.05</div>
<div class="t d" style="left:421px;top:566.0px;width:35px;text-align:right;">-0.07</div>
<div class="t d" style="left:458px;top:566.0px;width:35px;text-align:right;">28.43</div>
<div class="t d" style="left:-9px;top:581.8px;width:37px;text-align:right;">-10.96</div>
<div class="t d" style="left:30px;top:581.8px;width:37px;text-align:right;">0.99</div>
<div class="t d" style="left:69px;top:581.8px;width:37px;text-align:right;">-0.07</div>
<div class="t d" style="left:108px;top:581.8px;width:38px;text-align:right;">24.67</div>
<div class="t d" style="left:310px;top:581.8px;width:35px;text-align:right;color:#e8283c;">1.11</div>
<div class="t d" style="left:347px;top:581.8px;width:35px;text-align:right;">-11.44</div>
<div class="t d" style="left:384px;top:581.8px;width:35px;text-align:right;">0.99</div>
<div class="t d" style="left:421px;top:581.8px;width:35px;text-align:right;">-0.07</div>
<div class="t d" style="left:458px;top:581.8px;width:35px;text-align:right;">27.12</div>
<div class="b " style="left:-9px;top:374px;width:314px;height:1px;background:rgba(200,214,232,.6)"></div>
<div class="b " style="left:310.5px;top:374px;width:338.5px;height:1px;background:rgba(200,214,232,.6)"></div>
<div class="b " style="left:-9px;top:390px;width:314px;height:1px;background:rgba(200,214,232,.6)"></div>
<div class="b " style="left:310.5px;top:390px;width:338.5px;height:1px;background:rgba(200,214,232,.6)"></div>
<div class="b " style="left:-9px;top:406px;width:314px;height:1px;background:rgba(200,214,232,.6)"></div>
<div class="b " style="left:310.5px;top:406px;width:338.5px;height:1px;background:rgba(200,214,232,.6)"></div>
<div class="b " style="left:-9px;top:421px;width:314px;height:1px;background:rgba(200,214,232,.6)"></div>
<div class="b " style="left:310.5px;top:421px;width:338.5px;height:1px;background:rgba(200,214,232,.6)"></div>
<div class="b " style="left:-9px;top:437px;width:314px;height:1px;background:rgba(200,214,232,.6)"></div>
<div class="b " style="left:310.5px;top:437px;width:338.5px;height:1px;background:rgba(200,214,232,.6)"></div>
<div class="b " style="left:-9px;top:453px;width:314px;height:1px;background:rgba(200,214,232,.6)"></div>
<div class="b " style="left:310.5px;top:453px;width:338.5px;height:1px;background:rgba(200,214,232,.6)"></div>
<div class="b " style="left:-9px;top:469px;width:314px;height:1px;background:rgba(200,214,232,.6)"></div>
<div class="b " style="left:310.5px;top:469px;width:338.5px;height:1px;background:rgba(200,214,232,.6)"></div>
<div class="b " style="left:-9px;top:485px;width:314px;height:1px;background:rgba(200,214,232,.6)"></div>
<div class="b " style="left:310.5px;top:485px;width:338.5px;height:1px;background:rgba(200,214,232,.6)"></div>
<div class="b " style="left:-9px;top:500px;width:314px;height:1px;background:rgba(200,214,232,.6)"></div>
<div class="b " style="left:310.5px;top:500px;width:338.5px;height:1px;background:rgba(200,214,232,.6)"></div>
<div class="b " style="left:-9px;top:516px;width:314px;height:1px;background:rgba(200,214,232,.6)"></div>
<div class="b " style="left:310.5px;top:516px;width:338.5px;height:1px;background:rgba(200,214,232,.6)"></div>
<div class="b " style="left:-9px;top:532px;width:314px;height:1px;background:rgba(200,214,232,.6)"></div>
<div class="b " style="left:310.5px;top:532px;width:338.5px;height:1px;background:rgba(200,214,232,.6)"></div>
<div class="b " style="left:-9px;top:548px;width:314px;height:1px;background:rgba(200,214,232,.6)"></div>
<div class="b " style="left:310.5px;top:548px;width:338.5px;height:1px;background:rgba(200,214,232,.6)"></div>
<div class="b " style="left:-9px;top:564px;width:314px;height:1px;background:rgba(200,214,232,.6)"></div>
<div class="b " style="left:310.5px;top:564px;width:338.5px;height:1px;background:rgba(200,214,232,.6)"></div>
<div class="b " style="left:-9px;top:579px;width:314px;height:1px;background:rgba(200,214,232,.6)"></div>
<div class="b " style="left:310.5px;top:579px;width:338.5px;height:1px;background:rgba(200,214,232,.6)"></div>
<div class="b " style="left:30px;top:358px;width:1px;height:237px;background:rgba(200,214,232,.6)"></div>
<div class="b " style="left:69px;top:358px;width:1px;height:237px;background:rgba(200,214,232,.6)"></div>
<div class="b " style="left:108px;top:358px;width:1px;height:237px;background:rgba(200,214,232,.6)"></div>
<div class="b " style="left:148px;top:358px;width:1px;height:237px;background:rgba(200,214,232,.6)"></div>
<div class="b " style="left:187px;top:358px;width:1px;height:237px;background:rgba(200,214,232,.6)"></div>
<div class="b " style="left:226px;top:358px;width:1px;height:237px;background:rgba(200,214,232,.6)"></div>
<div class="b " style="left:266px;top:358px;width:1px;height:237px;background:rgba(200,214,232,.6)"></div>
<div class="b " style="left:347px;top:358px;width:1px;height:237px;background:rgba(200,214,232,.6)"></div>
<div class="b " style="left:384px;top:358px;width:1px;height:237px;background:rgba(200,214,232,.6)"></div>
<div class="b " style="left:421px;top:358px;width:1px;height:237px;background:rgba(200,214,232,.6)"></div>
<div class="b " style="left:458px;top:358px;width:1px;height:237px;background:rgba(200,214,232,.6)"></div>
<div class="b " style="left:495px;top:358px;width:1px;height:237px;background:rgba(200,214,232,.6)"></div>
<div class="b " style="left:533px;top:358px;width:1px;height:237px;background:rgba(200,214,232,.6)"></div>
<div class="b " style="left:570px;top:358px;width:1px;height:237px;background:rgba(200,214,232,.6)"></div>
<div class="b " style="left:607px;top:358px;width:1px;height:237px;background:rgba(200,214,232,.6)"></div>
<div class="b " style="left:649px;top:358px;width:14px;height:237px;background:#d3d9e8"></div>
<svg class="b" style="left:653px;top:364px" width="7" height="4"><path d="M.5 3.500h6L3.500 .5z" fill="#5c6782"/></svg>
<svg class="b" style="left:653px;top:586px" width="7" height="4"><path d="M.5 .5h6L3.500 3.500z" fill="#5c6782"/></svg>
<div class="b " style="left:652.5px;top:437.5px;width:8.5px;height:14.5px;background:#98a2b7"></div>
<div class="b " style="left:-5px;top:605px;width:669.5px;height:22px;background:#dbe0ed"></div>
<div class="b " style="left:545.5px;top:609.5px;width:118.5px;height:13px;background:#e3e7f1"></div>
<div class="b " style="left:-5px;top:608.2px;width:105px;height:16.3px;background:#fff;border:1px solid #b3bbcd;box-sizing:border-box"></div>
<div class="t " style="left:-1px;top:610.5px;">ined</div>
<svg class="b" style="left:89px;top:615px" width="7" height="4"><path d="M1 .6h5L3.500 3.300z" fill="#3a4666"/></svg>
<div class="b " style="left:107px;top:608.2px;width:69px;height:16.3px;background:#fff;border:1px solid #b3bbcd;box-sizing:border-box"></div>
<div class="t " style="left:110px;top:610.5px;">Auto</div>
<svg class="b" style="left:165px;top:615px" width="7" height="4"><path d="M1 .6h5L3.500 3.300z" fill="#3a4666"/></svg>
<div class="b " style="left:545.5px;top:611.5px;width:9px;height:9px;background:#fff;border:1px solid #a8b0c4;box-sizing:border-box"></div>
<div class="t " style="left:559px;top:610px;width:105px;letter-spacing:.3px">Ignore Today's Trades</div>
<div class="b " style="left:-9px;top:627px;width:673px;height:60px;background:#fff;border:1px solid #bcc5d8;box-sizing:border-box"></div>
<div class="b " style="left:-9px;top:628px;width:672px;height:17px;background:#f8fafd"></div>
<div class="t h" style="left:-9px;top:630.0px;width:19.5px;text-align:center;"></div>
<div class="t h" style="left:10.5px;top:630.0px;width:58.5px;text-align:center;">Cost</div>
<div class="t h" style="left:69px;top:630.0px;width:59px;text-align:center;">Curr Cost</div>
<div class="t h" style="left:128px;top:630.0px;width:58px;text-align:center;">Commissi...</div>
<div class="t h" style="left:186px;top:630.0px;width:59px;text-align:center;">PnL</div>
<div class="t h" style="left:245px;top:630.0px;width:59px;text-align:center;">PnL%</div>
<div class="t h" style="left:304px;top:630.0px;width:58px;text-align:center;">Delta</div>
<div class="t h" style="left:362px;top:630.0px;width:59px;text-align:center;">Gamma</div>
<div class="t h" style="left:421px;top:630.0px;width:59px;text-align:center;">Theta</div>
<div class="t h" style="left:480px;top:630.0px;width:58px;text-align:center;">Vega</div>
<div class="t h" style="left:538px;top:630.0px;width:59px;text-align:center;">T/D</div>
<div class="t h" style="left:597px;top:630.0px;width:66px;text-align:center;">Plot</div>
<div class="b " style="left:10.5px;top:628px;width:1px;height:17px;background:#cdd5e4"></div>
<div class="b " style="left:69px;top:628px;width:1px;height:17px;background:#cdd5e4"></div>
<div class="b " style="left:128px;top:628px;width:1px;height:17px;background:#cdd5e4"></div>
<div class="b " style="left:186px;top:628px;width:1px;height:17px;background:#cdd5e4"></div>
<div class="b " style="left:245px;top:628px;width:1px;height:17px;background:#cdd5e4"></div>
<div class="b " style="left:304px;top:628px;width:1px;height:17px;background:#cdd5e4"></div>
<div class="b " style="left:362px;top:628px;width:1px;height:17px;background:#cdd5e4"></div>
<div class="b " style="left:421px;top:628px;width:1px;height:17px;background:#cdd5e4"></div>
<div class="b " style="left:480px;top:628px;width:1px;height:17px;background:#cdd5e4"></div>
<div class="b " style="left:538px;top:628px;width:1px;height:17px;background:#cdd5e4"></div>
<div class="b " style="left:597px;top:628px;width:1px;height:17px;background:#cdd5e4"></div>
<div class="b " style="left:-9px;top:645px;width:672px;height:1px;background:#cdd5e4"></div>
<div class="b " style="left:-9px;top:661px;width:672px;height:1px;background:#e4e8f0"></div>
<div class="b " style="left:10.5px;top:646px;width:1px;height:30px;background:#e4e8f0"></div>
<div class="b " style="left:69px;top:646px;width:1px;height:30px;background:#e4e8f0"></div>
<div class="b " style="left:128px;top:646px;width:1px;height:30px;background:#e4e8f0"></div>
<div class="b " style="left:186px;top:646px;width:1px;height:30px;background:#e4e8f0"></div>
<div class="b " style="left:245px;top:646px;width:1px;height:30px;background:#e4e8f0"></div>
<div class="b " style="left:304px;top:646px;width:1px;height:30px;background:#e4e8f0"></div>
<div class="b " style="left:362px;top:646px;width:1px;height:30px;background:#e4e8f0"></div>
<div class="b " style="left:421px;top:646px;width:1px;height:30px;background:#e4e8f0"></div>
<div class="b " style="left:480px;top:646px;width:1px;height:30px;background:#e4e8f0"></div>
<div class="b " style="left:538px;top:646px;width:1px;height:30px;background:#e4e8f0"></div>
<div class="b " style="left:597px;top:646px;width:1px;height:30px;background:#e4e8f0"></div>
<div class="t d" style="left:-9px;top:648.25px;width:17.5px;text-align:right;">43</div>
<div class="t d" style="left:10.5px;top:648.25px;width:56.5px;text-align:right;">622.47</div>
<div class="t d" style="left:69px;top:648.25px;width:57px;text-align:right;">-466.50</div>
<div class="t d" style="left:128px;top:648.25px;width:56px;text-align:right;">42.00</div>
<div class="t d" style="left:186px;top:648.25px;width:57px;text-align:right;color:#2d9a2d;">155.97</div>
<div class="t d" style="left:245px;top:648.25px;width:57px;text-align:right;color:#2d9a2d;">15.34%</div>
<div class="t d" style="left:304px;top:648.25px;width:56px;text-align:right;">-19.78</div>
<div class="t d" style="left:362px;top:648.25px;width:57px;text-align:right;">-2.12</div>
<div class="t d" style="left:421px;top:648.25px;width:57px;text-align:right;">13.40</div>
<div class="t d" style="left:480px;top:648.25px;width:56px;text-align:right;">-45.00</div>
<div class="t d" style="left:538px;top:648.25px;width:57px;text-align:right;">0.7</div>
<div class="t d" style="left:-9px;top:664.25px;width:17.5px;text-align:right;">93</div>
<div class="t d" style="left:10.5px;top:664.25px;width:56.5px;text-align:right;">798.57</div>
<div class="t d" style="left:69px;top:664.25px;width:57px;text-align:right;">-651.00</div>
<div class="t d" style="left:128px;top:664.25px;width:56px;text-align:right;">50.40</div>
<div class="t d" style="left:186px;top:664.25px;width:57px;text-align:right;color:#2d9a2d;">147.57</div>
<div class="t d" style="left:245px;top:664.25px;width:57px;text-align:right;color:#2d9a2d;">14.71%</div>
<div class="t d" style="left:304px;top:664.25px;width:56px;text-align:right;">-4.99</div>
<div class="t d" style="left:362px;top:664.25px;width:57px;text-align:right;">-2.71</div>
<div class="t d" style="left:421px;top:664.25px;width:57px;text-align:right;">12.88</div>
<div class="t d" style="left:480px;top:664.25px;width:56px;text-align:right;">-52.12</div>
<div class="t d" style="left:538px;top:664.25px;width:57px;text-align:right;">2.6</div>
<div class="b " style="left:626px;top:649.5px;width:8.5px;height:8.5px;background:#fff;border:1px solid #b4bccd;box-sizing:border-box"></div>
<svg class="b" style="left:627px;top:650.0px" width="8" height="8"><path d="M1.200 3.800l1.800 2L6.200 1.200" fill="none" stroke="#6a7388" stroke-width="1.100"/></svg>
<div class="b " style="left:626px;top:665.5px;width:8.5px;height:8.5px;background:#fff;border:1px solid #b4bccd;box-sizing:border-box"></div>
<svg class="b" style="left:627px;top:666.0px" width="8" height="8"><path d="M1.200 3.800l1.800 2L6.200 1.200" fill="none" stroke="#6a7388" stroke-width="1.100"/></svg>
<div class="b " style="left:675.5px;top:138px;width:1px;height:537px;background:#b6bed2"></div>
<div class="b " style="left:677px;top:138px;width:403px;height:24px;background:#d0d6e6"></div>
<div class="b " style="left:676px;top:139.5px;width:65px;height:24px;background:#dbe0ec;border-top:1px solid #e2e6f0;box-sizing:border-box"></div>
<div class="t " style="left:677px;top:144px;width:64px;text-align:center;">Risk Chart</div>
<div class="b " style="left:741px;top:139px;width:68px;height:23px;background:#d2d8e8;border:1px solid #aab3c8;box-sizing:border-box"></div>
<div class="t " style="left:741px;top:144px;width:67px;text-align:center;">Price Chart</div>
<div class="b " style="left:808px;top:139px;width:107px;height:23px;background:#d2d8e8;border:1px solid #aab3c8;box-sizing:border-box"></div>
<div class="t " style="left:808px;top:144px;width:106px;text-align:center;">Movement Analysis</div>
<div class="b " style="left:914px;top:139px;width:56px;height:23px;background:#d2d8e8;border:1px solid #aab3c8;box-sizing:border-box"></div>
<div class="t " style="left:914px;top:144px;width:55px;text-align:center;">Volatility</div>
<div class="b " style="left:969px;top:139px;width:122px;height:23px;background:#d2d8e8;border:1px solid #aab3c8;box-sizing:border-box"></div>
<div class="t " style="left:978px;top:144px;">Statistics &amp; Fundament</div>
<div class="b " style="left:741px;top:161px;width:340px;height:1px;background:#aab3c8"></div>
<div class="b " style="left:677px;top:162px;width:403px;height:22px;background:#dbe0ec"></div>
<div class="t " style="left:681px;top:166.5px;">Vol Adjust</div>
<div class="b " style="left:730px;top:164.2px;width:45.6px;height:16.5px;background:#fff;border:1px solid #b3bbcd;box-sizing:border-box"></div>
<div class="t " style="left:735px;top:166px;width:24px;text-align:right;">0</div>
<svg class="b" style="left:765px;top:166px" width="7" height="13"><path d="M.8 4.800L3.500 1.800 6.200 4.800zM.8 8.200L3.500 11.200 6.200 8.200z" fill="#5a6684"/></svg>
<div class="t " style="left:990px;top:166.5px;">Projection</div>
<div class="b " style="left:1038px;top:164px;width:50px;height:17px;background:#fff;border:1px solid #b3bbcd;box-sizing:border-box"></div>
<div class="t " style="left:1041px;top:166px;">06/06/20</div>
<svg class="b a" style="left:676.500px;top:183px" width="403.500" height="474" viewBox="676.500 183 403.500 474" font-family="Liberation Sans, sans-serif" font-size="10"><rect x="676.500" y="183.500" width="404" height="473.500" fill="#fff"/><rect x="921.300" y="199.500" width="160" height="276" fill="#92ccdc"/><rect x="962.700" y="199.500" width="84.800" height="276" fill="#4f81bd"/><path d="M724.5 461.9H1080M724.5 448.0H1080M724.5 434.2H1080M724.5 420.3H1080M724.5 406.5H1080M724.5 392.6H1080M724.5 378.8H1080M724.5 364.9H1080M724.5 351.1H1080M724.5 337.2H1080M724.5 309.5H1080M724.5 295.7H1080M724.5 281.8H1080M724.5 268.0H1080M724.5 254.1H1080M724.5 240.3H1080M724.5 226.4H1080M724.5 212.6H1080M724.5 198.8H1080M735.6 199.5V475.5M788.7 199.5V475.5M841.8 199.5V475.5M894.9 199.5V475.5M948.0 199.5V475.5M1001.1 199.5V475.5M1054.2 199.5V475.5" stroke="#dcdcdc" stroke-opacity=".8" stroke-width="1" fill="none"/><path d="M921.3 461.9H1080M921.3 448.0H1080M921.3 434.2H1080M921.3 420.3H1080M921.3 406.5H1080M921.3 392.6H1080M921.3 378.8H1080M921.3 364.9H1080M921.3 351.1H1080M921.3 337.2H1080M921.3 309.5H1080M921.3 295.7H1080M921.3 281.8H1080M921.3 268.0H1080M921.3 254.1H1080M921.3 240.3H1080M921.3 226.4H1080M921.3 212.6H1080M921.3 198.8H1080M948.0 199.5V475.5M1001.1 199.5V475.5M1054.2 199.5V475.5" stroke="#e4eef4" stroke-opacity=".12" stroke-width="1" fill="none"/><path d="M721.5 475.8H724.5M721.5 461.9H724.5M721.5 448.0H724.5M721.5 434.2H724.5M721.5 420.3H724.5M721.5 406.5H724.5M721.5 392.6H724.5M721.5 378.8H724.5M721.5 364.9H724.5M721.5 351.1H724.5M721.5 337.2H724.5M721.5 323.4H724.5M721.5 309.5H724.5M721.5 295.7H724.5M721.5 281.8H724.5M721.5 268.0H724.5M721.5 254.1H724.5M721.5 240.3H724.5M721.5 226.4H724.5M721.5 212.6H724.5M721.5 198.8H724.5" stroke="#c8c8c8" stroke-width="1"/><path d="M724.5 199.500V475.500" stroke="#c8c8c8" stroke-width="1"/><path d="M724.500 323.400H1080" stroke="#333" stroke-width="1"/><text transform="translate(930.8 229.500) rotate(-90) scale(.89 1)" fill="#5f9fd0">527.49</text><text transform="translate(972.9 229.500) rotate(-90) scale(.89 1)" fill="#9dbce4">531.45</text><text transform="translate(1045.8 229.500) rotate(-90) scale(.89 1)" fill="#9dbce4">539.35</text><g fill="none" stroke-width="1.150"><path d="M724.500 358.400 L790 321.300 C 830 298 880 266 945 263 C 1000 262 1040 282 1080 308" stroke="#f06464"/><path d="M724.500 372 L797 318" stroke="#f06464"/><path d="M724.500 427.600 C 770 405 820 368 887 321.500 C 930 292 965 274 1005 273.200 C 1035 273 1060 282 1080 292.600" stroke="#f06464"/><path d="M724.500 398.300 L852.300 336.900" stroke="#f06464"/><path d="M852.300 336.900 C 900 315 950 302 995 302.500 C 1030 303 1055 309 1080 314" stroke="#3cc84a"/><path d="M765 336.500 L853.600 301.300" stroke="#9cc4f4"/><path d="M853.600 301.300 C 890 290 930 289 973 294 C 990 296.500 1000 300 1012 303.300" stroke="#42e04a"/><path d="M1012 303.300 L1080 324" stroke="#6fa4ec"/></g><path d="M723.500 449 L777.500 238 Q777.800 237.200 779 237.200 H1080" fill="none" stroke="#4646c8" stroke-width="1.600"/><path d="M724.500 461.600 H852.300 L916 213 H1080" fill="none" stroke="#0a7d1e" stroke-width="1.800" stroke-linejoin="miter"/><path d="M887 199.500V475.500" stroke="#a030b0" stroke-width="1.300" stroke-dasharray="3 3"/><text transform="translate(886.300 473) rotate(-90) scale(.89 1)" fill="#a020b0">524.27</text><path d="M1006.500 297.500l8 2.500v3.500h-6z" fill="#b08a80" opacity=".85"/><circle cx="1012" cy="303.300" r="2.900" fill="#00f0f0" stroke="#16264a" stroke-width=".9"/><text transform="translate(718.500 202.8) scale(.89 1)" text-anchor="end" fill="#222">89%</text><text transform="translate(718.500 216.6) scale(.89 1)" text-anchor="end" fill="#222">79%</text><text transform="translate(718.500 230.4) scale(.89 1)" text-anchor="end" fill="#222">69%</text><text transform="translate(718.500 244.3) scale(.89 1)" text-anchor="end" fill="#222">59%</text><text transform="translate(718.500 258.1) scale(.89 1)" text-anchor="end" fill="#222">49%</text><text transform="translate(718.500 272.0) scale(.89 1)" text-anchor="end" fill="#222">39%</text><text transform="translate(718.500 285.8) scale(.89 1)" text-anchor="end" fill="#222">30%</text><text transform="translate(718.500 299.7) scale(.89 1)" text-anchor="end" fill="#222">20%</text><text transform="translate(718.500 313.5) scale(.89 1)" text-anchor="end" fill="#222">10%</text><text transform="translate(718.500 327.4) scale(.89 1)" text-anchor="end" fill="#222">0%</text><text transform="translate(718.500 341.2) scale(.89 1)" text-anchor="end" fill="#222">-10%</text><text transform="translate(718.500 355.1) scale(.89 1)" text-anchor="end" fill="#222">-20%</text><text transform="translate(718.500 368.9) scale(.89 1)" text-anchor="end" fill="#222">-30%</text><text transform="translate(718.500 382.8) scale(.89 1)" text-anchor="end" fill="#222">-39%</text><text transform="translate(718.500 396.6) scale(.89 1)" text-anchor="end" fill="#222">-49%</text><text transform="translate(718.500 410.5) scale(.89 1)" text-anchor="end" fill="#222">-59%</text><text transform="translate(718.500 424.3) scale(.89 1)" text-anchor="end" fill="#222">-69%</text><text transform="translate(718.500 438.2) scale(.89 1)" text-anchor="end" fill="#222">-79%</text><text transform="translate(718.500 452.0) scale(.89 1)" text-anchor="end" fill="#222">-89%</text><text transform="translate(718.500 465.9) scale(.89 1)" text-anchor="end" fill="#222">-98%</text><text transform="translate(718.500 479.8) scale(.89 1)" text-anchor="end" fill="#222">-108%</text><rect x="681.700" y="297.200" width="38.600" height="10.300" fill="#008000"/><text transform="translate(718.500 306) scale(.89 1)" text-anchor="end" fill="#fff">15%</text><text transform="translate(735.6 194.800) scale(.89 1)" text-anchor="middle" fill="#222">-4.7%</text><text transform="translate(788.7 194.800) scale(.89 1)" text-anchor="middle" fill="#222">-3.8%</text><text transform="translate(841.8 194.800) scale(.89 1)" text-anchor="middle" fill="#222">-2.9%</text><text transform="translate(894.9 194.800) scale(.89 1)" text-anchor="middle" fill="#222">-1.9%</text><text transform="translate(948.0 194.800) scale(.89 1)" text-anchor="middle" fill="#222">-1.0%</text><text transform="translate(1054.2 194.800) scale(.89 1)" text-anchor="middle" fill="#222">0.9%</text><text transform="translate(992 194.800) scale(.89 1)" fill="#222">-0</text><rect x="999.800" y="183.800" width="24.600" height="10.500" fill="#eef2f8" stroke="#5a6478" stroke-width=".8"/><text transform="translate(1012.200 193) scale(.89 1)" text-anchor="middle" fill="#222">0.1%</text><text transform="translate(735.6 488.800) scale(.89 1)" text-anchor="middle" fill="#222">510</text><text transform="translate(788.7 488.800) scale(.89 1)" text-anchor="middle" fill="#222">515</text><text transform="translate(841.8 488.800) scale(.89 1)" text-anchor="middle" fill="#222">520</text><text transform="translate(894.9 488.800) scale(.89 1)" text-anchor="middle" fill="#222">525</text><text transform="translate(948.0 488.800) scale(.89 1)" text-anchor="middle" fill="#222">530</text><text transform="translate(1054.2 488.800) scale(.89 1)" text-anchor="middle" fill="#222">540</text><text transform="translate(1001 488.800) scale(.89 1)" text-anchor="middle" fill="#888">535</text><rect x="728.500" y="203.500" width="132" height="118" rx="4" fill="#e8eef8" fill-opacity=".82" stroke="#9fb0c8" stroke-width="1"/><rect x="735.100" y="211.0" width="2.800" height="10.800" fill="#a8e8a0"/><text transform="translate(738.300 219.7) scale(.89 1)" fill="#555" xml:space="preserve">139.47 Realized PnL</text><rect x="735.100" y="222.8" width="2.800" height="10.800" fill="#4cc84c"/><text transform="translate(738.3 231.5) scale(.89 1)" fill="#444" xml:space="preserve">-3</text><text transform="translate(748.5 231.5) scale(.89 1)" fill="#f05a5a" xml:space="preserve">28jun. 507 Put  Δ</text><text transform="translate(851.700 231.5) scale(.89 1)" fill="#f05a5a" text-anchor="end">-6.51</text><rect x="735.100" y="234.6" width="2.800" height="10.800" fill="#4cc84c"/><text transform="translate(738.3 243.3) scale(.89 1)" fill="#444" xml:space="preserve">+3</text><text transform="translate(751.0 243.3) scale(.89 1)" fill="#5a5af0" xml:space="preserve">28jun. 514 Put Δ</text><text transform="translate(851.700 243.3) scale(.89 1)" fill="#5a5af0" text-anchor="end">-10.24</text><rect x="735.100" y="246.3" width="2.800" height="10.800" fill="#4cc84c"/><text transform="translate(738.3 255.0) scale(.89 1)" fill="#444" xml:space="preserve">+3</text><text transform="translate(751.0 255.0) scale(.89 1)" fill="#5a5af0" xml:space="preserve">28jun. 521 Put Δ</text><text transform="translate(851.700 255.0) scale(.89 1)" fill="#5a5af0" text-anchor="end">-16.71</text><rect x="735.100" y="258.1" width="2.800" height="10.800" fill="#4cc84c"/><text transform="translate(738.3 266.8) scale(.89 1)" fill="#444" xml:space="preserve">-3</text><text transform="translate(748.5 266.8) scale(.89 1)" fill="#f05a5a" xml:space="preserve">28jun. 527 Put  Δ</text><text transform="translate(851.700 266.8) scale(.89 1)" fill="#f05a5a" text-anchor="end">-25.40</text><rect x="735.100" y="269.9" width="2.800" height="10.800" fill="#7aa0f0"/><text transform="translate(738.3 278.6) scale(.89 1)" fill="#444" xml:space="preserve">+3</text><text transform="translate(751.0 278.6) scale(.89 1)" fill="#5a5af0" xml:space="preserve">28jun. 548 Call Δ</text><text transform="translate(851.700 278.6) scale(.89 1)" fill="#5a5af0" text-anchor="end">22.37</text><rect x="735.100" y="281.7" width="2.800" height="10.800" fill="#7aa0f0"/><text transform="translate(738.3 290.4) scale(.89 1)" fill="#444" xml:space="preserve">+3</text><text transform="translate(751.0 290.4) scale(.89 1)" fill="#5a5af0" xml:space="preserve">28jun. 507 Put Δ</text><text transform="translate(851.700 290.4) scale(.89 1)" fill="#5a5af0" text-anchor="end">-6.51</text><rect x="735.100" y="293.5" width="2.800" height="10.800" fill="#7aa0f0"/><text transform="translate(738.3 302.2) scale(.89 1)" fill="#444" xml:space="preserve">-3</text><text transform="translate(748.5 302.2) scale(.89 1)" fill="#f05a5a" xml:space="preserve">28jun. 544 Call  Δ</text><text transform="translate(851.700 302.2) scale(.89 1)" fill="#f05a5a" text-anchor="end">32.76</text><rect x="735.100" y="305.2" width="2.800" height="10.800" fill="#7aa0f0"/><text transform="translate(738.3 313.9) scale(.89 1)" fill="#444" xml:space="preserve">-3</text><text transform="translate(748.5 313.9) scale(.89 1)" fill="#f05a5a" xml:space="preserve">28jun. 514 Put  Δ</text><text transform="translate(851.700 313.9) scale(.89 1)" fill="#f05a5a" text-anchor="end">-10.24</text><rect x="729" y="424.500" width="96.500" height="46.500" rx="3.500" fill="#e8eef8" fill-opacity=".8" stroke="#9fb0c8" stroke-width="1"/><text transform="translate(735.500 440) scale(.89 1)" fill="#4aa84a">28/06/2024 (0)</text><text transform="translate(735.500 451.800) scale(.89 1)" fill="#f06464">17/06/2024 (11) T+11</text><text transform="translate(735.500 463.400) scale(.89 1)" fill="#5ad85a">06/06/2024 (22) T+0</text><text transform="translate(806.500 467.500) scale(.89 1)" text-anchor="middle" fill="#a020b0" stroke="#a020b0" stroke-width=".15">21.5%</text><text transform="translate(1006 467.500) scale(.89 1)" text-anchor="middle" fill="#a020b0">49.2%</text><rect x="680.500" y="495" width="420" height="158" rx="4" fill="#e9eff8" stroke="#8e9db8" stroke-width="1"/><text transform="translate(702 521.8) scale(.89 1)" text-anchor="middle" fill="#555">PnL</text><text transform="translate(702 559.0) scale(.89 1)" text-anchor="middle" fill="#555">Delta</text><text transform="translate(702 586.7) scale(.89 1)" text-anchor="middle" fill="#555">Gamma</text><text transform="translate(702 613.9) scale(.89 1)" text-anchor="middle" fill="#555">Theta</text><text transform="translate(702 641.7) scale(.89 1)" text-anchor="middle" fill="#555">Vega</text><text transform="translate(735.6 508.1) scale(.89 1)" text-anchor="middle" fill="#f07070">-49%</text><text transform="translate(735.6 518.3) scale(.89 1)" text-anchor="middle" fill="#f07070">-503</text><text transform="translate(788.7 508.1) scale(.89 1)" text-anchor="middle" fill="#f07070">-31%</text><text transform="translate(788.7 518.3) scale(.89 1)" text-anchor="middle" fill="#f07070">-316</text><text transform="translate(841.8 508.1) scale(.89 1)" text-anchor="middle" fill="#f07070">-13%</text><text transform="translate(841.8 518.3) scale(.89 1)" text-anchor="middle" fill="#f07070">-130</text><text transform="translate(894.9 526.8) scale(.89 1)" text-anchor="middle" fill="#6a6af0">26</text><text transform="translate(894.9 535.0) scale(.89 1)" text-anchor="middle" fill="#6a6af0">3%</text><text transform="translate(948.0 526.8) scale(.89 1)" text-anchor="middle" fill="#6a6af0">125</text><text transform="translate(948.0 535.0) scale(.89 1)" text-anchor="middle" fill="#6a6af0">12%</text><text transform="translate(1054.2 526.8) scale(.89 1)" text-anchor="middle" fill="#6a6af0">108</text><text transform="translate(1054.2 535.0) scale(.89 1)" text-anchor="middle" fill="#6a6af0">11%</text><rect x="724.4" y="517.8" width="38.0" height="9.0" fill="#f07474" stroke="#7a4a4a" stroke-width=".8"/><rect x="762.4" y="517.8" width="53.2" height="5.7" fill="#f07474" stroke="#7a4a4a" stroke-width=".8"/><rect x="815.6" y="517.8" width="53.1" height="2.2" fill="#f07474" stroke="#7a4a4a" stroke-width=".8"/><path d="M868.7 517.8H921.9" stroke="#444" stroke-width="1"/><rect x="921.9" y="516.2" width="53.2" height="1.6" fill="#5272f0" stroke="#3a4a7a" stroke-width=".8"/><rect x="975.1" y="515.0" width="53.2" height="2.8" fill="#5272f0" stroke="#3a4a7a" stroke-width=".8"/><rect x="1028.3" y="515.8" width="53.2" height="2.0" fill="#5272f0" stroke="#3a4a7a" stroke-width=".8"/><rect x="724.4" y="546.0" width="38.0" height="8.4" fill="#5272f0" stroke="#3a4a7a" stroke-width=".8"/><rect x="762.4" y="544.8" width="53.2" height="9.6" fill="#5272f0" stroke="#3a4a7a" stroke-width=".8"/><rect x="815.6" y="546.0" width="53.1" height="8.4" fill="#5272f0" stroke="#3a4a7a" stroke-width=".8"/><rect x="868.7" y="548.0" width="53.2" height="6.4" fill="#5272f0" stroke="#3a4a7a" stroke-width=".8"/><rect x="921.9" y="551.4" width="53.2" height="3.0" fill="#5272f0" stroke="#3a4a7a" stroke-width=".8"/><rect x="975.1" y="554.4" width="53.2" height="0.9" fill="#f07474" stroke="#7a4a4a" stroke-width=".8"/><rect x="1028.3" y="554.4" width="53.2" height="3.2" fill="#f07474" stroke="#7a4a4a" stroke-width=".8"/><text transform="translate(735.6 563.3) scale(.89 1)" text-anchor="middle" fill="#6a6af0">35.50</text><text transform="translate(788.7 563.3) scale(.89 1)" text-anchor="middle" fill="#6a6af0">38.14</text><text transform="translate(841.8 563.3) scale(.89 1)" text-anchor="middle" fill="#6a6af0">35.25</text><text transform="translate(894.9 563.3) scale(.89 1)" text-anchor="middle" fill="#6a6af0">26.30</text><text transform="translate(948.0 563.3) scale(.89 1)" text-anchor="middle" fill="#6a6af0">12.77</text><text transform="translate(1054.2 554.3) scale(.89 1)" text-anchor="middle" fill="#f07070">-14.38</text><text transform="translate(841.8 582.1) scale(.89 1)" text-anchor="middle" fill="#f07070">-1.20</text><text transform="translate(894.9 582.1) scale(.89 1)" text-anchor="middle" fill="#f07070">-2.33</text><text transform="translate(948.0 582.1) scale(.89 1)" text-anchor="middle" fill="#f07070">-2.97</text><text transform="translate(1054.2 582.1) scale(.89 1)" text-anchor="middle" fill="#f07070">-1.99</text><rect x="724.4" y="579.2" width="38.0" height="2.8" fill="#5272f0" stroke="#3a4a7a" stroke-width=".8"/><path d="M762.4 582.0H815.6" stroke="#444" stroke-width="1"/><rect x="815.6" y="582.0" width="53.1" height="3.4" fill="#f07474" stroke="#7a4a4a" stroke-width=".8"/><rect x="868.7" y="582.0" width="53.2" height="6.7" fill="#f07474" stroke="#7a4a4a" stroke-width=".8"/><rect x="921.9" y="582.0" width="53.2" height="8.8" fill="#f07474" stroke="#7a4a4a" stroke-width=".8"/><rect x="975.1" y="582.0" width="53.2" height="8.2" fill="#f07474" stroke="#7a4a4a" stroke-width=".8"/><rect x="1028.3" y="582.0" width="53.2" height="5.8" fill="#f07474" stroke="#7a4a4a" stroke-width=".8"/><text transform="translate(735.6 591.0) scale(.89 1)" text-anchor="middle" fill="#6a6af0">0.97</text><text transform="translate(788.7 591.0) scale(.89 1)" text-anchor="middle" fill="#6a6af0">0.02</text><text transform="translate(735.6 610.1) scale(.89 1)" text-anchor="middle" fill="#f07070">-13.78</text><text transform="translate(788.7 610.1) scale(.89 1)" text-anchor="middle" fill="#f07070">-9.76</text><text transform="translate(841.8 610.1) scale(.89 1)" text-anchor="middle" fill="#f07070">-3.25</text><rect x="724.4" y="609.8" width="38.0" height="8.5" fill="#f07474" stroke="#7a4a4a" stroke-width=".8"/><rect x="762.4" y="609.8" width="53.2" height="5.7" fill="#f07474" stroke="#7a4a4a" stroke-width=".8"/><rect x="815.6" y="609.8" width="53.1" height="1.7" fill="#f07474" stroke="#7a4a4a" stroke-width=".8"/><rect x="868.7" y="607.0" width="53.2" height="2.8" fill="#5272f0" stroke="#3a4a7a" stroke-width=".8"/><rect x="921.9" y="603.5" width="53.2" height="6.3" fill="#5272f0" stroke="#3a4a7a" stroke-width=".8"/><rect x="975.1" y="601.5" width="53.2" height="8.3" fill="#5272f0" stroke="#3a4a7a" stroke-width=".8"/><rect x="1028.3" y="602.2" width="53.2" height="7.6" fill="#5272f0" stroke="#3a4a7a" stroke-width=".8"/><text transform="translate(894.9 618.1) scale(.89 1)" text-anchor="middle" fill="#6a6af0">4.13</text><text transform="translate(948.0 618.1) scale(.89 1)" text-anchor="middle" fill="#6a6af0">10.13</text><text transform="translate(1054.2 618.1) scale(.89 1)" text-anchor="middle" fill="#6a6af0">11.65</text><text transform="translate(841.8 637.0) scale(.89 1)" text-anchor="middle" fill="#f07070">-11.38</text><text transform="translate(894.9 637.0) scale(.89 1)" text-anchor="middle" fill="#f07070">-35.22</text><text transform="translate(948.0 637.0) scale(.89 1)" text-anchor="middle" fill="#f07070">-51.32</text><text transform="translate(1054.2 637.0) scale(.89 1)" text-anchor="middle" fill="#f07070">-41.51</text><rect x="724.4" y="631.8" width="38.0" height="4.8" fill="#5272f0" stroke="#3a4a7a" stroke-width=".8"/><rect x="762.4" y="634.9" width="53.2" height="1.7" fill="#5272f0" stroke="#3a4a7a" stroke-width=".8"/><rect x="815.6" y="636.6" width="53.1" height="2.8" fill="#f07474" stroke="#7a4a4a" stroke-width=".8"/><rect x="868.7" y="636.6" width="53.2" height="5.6" fill="#f07474" stroke="#7a4a4a" stroke-width=".8"/><rect x="921.9" y="636.6" width="53.2" height="8.4" fill="#f07474" stroke="#7a4a4a" stroke-width=".8"/><rect x="975.1" y="636.6" width="53.2" height="8.8" fill="#f07474" stroke="#7a4a4a" stroke-width=".8"/><rect x="1028.3" y="636.6" width="53.2" height="6.8" fill="#f07474" stroke="#7a4a4a" stroke-width=".8"/><text transform="translate(735.6 646.2) scale(.89 1)" text-anchor="middle" fill="#6a6af0">28.73</text><text transform="translate(788.7 646.2) scale(.89 1)" text-anchor="middle" fill="#6a6af0">12.06</text><text transform="translate(1001.100 517.9) scale(.89 1)" text-anchor="middle" fill="#6a6af0">152</text><text transform="translate(1001.100 534.6) scale(.89 1)" text-anchor="middle" fill="#6a6af0">15%</text><text transform="translate(1001.100 553.9) scale(.89 1)" text-anchor="middle" fill="#f07070">-2.00</text><text transform="translate(1001.100 581.7) scale(.89 1)" text-anchor="middle" fill="#f07070">-2.84</text><text transform="translate(1001.100 617.7) scale(.89 1)" text-anchor="middle" fill="#6a6af0">12.82</text><text transform="translate(1001.100 636.6) scale(.89 1)" text-anchor="middle" fill="#f07070">-53.58</text><rect x="991.200" y="479.500" width="41.300" height="173" rx="3.500" fill="#eaf0f8" fill-opacity=".88" stroke="#8e98ac" stroke-width="1"/><text transform="translate(1012.500 489) scale(.89 1)" text-anchor="middle" fill="#222">536.05</text><text transform="translate(1012.500 518.6) scale(.89 1)" text-anchor="middle" fill="#2020f0">148</text><text transform="translate(1012.500 531.1) scale(.89 1)" text-anchor="middle" fill="#2020f0">14.5%</text><text transform="translate(1012.500 559.1) scale(.89 1)" text-anchor="middle" fill="#f02020">-4.99</text><text transform="translate(1012.500 586.9) scale(.89 1)" text-anchor="middle" fill="#f02020">-2.71</text><text transform="translate(1012.500 613.8) scale(.89 1)" text-anchor="middle" fill="#2020f0">12.88</text><text transform="translate(1012.500 641.9) scale(.89 1)" text-anchor="middle" fill="#f02020">-52.12</text></svg>
<div class="b " style="left:677px;top:656px;width:403px;height:19px;background:#293955"></div>
<div class="t " style="left:1000px;top:659.5px;width:72px;text-align:right;color:#fff">400%</div>
</body></html>
